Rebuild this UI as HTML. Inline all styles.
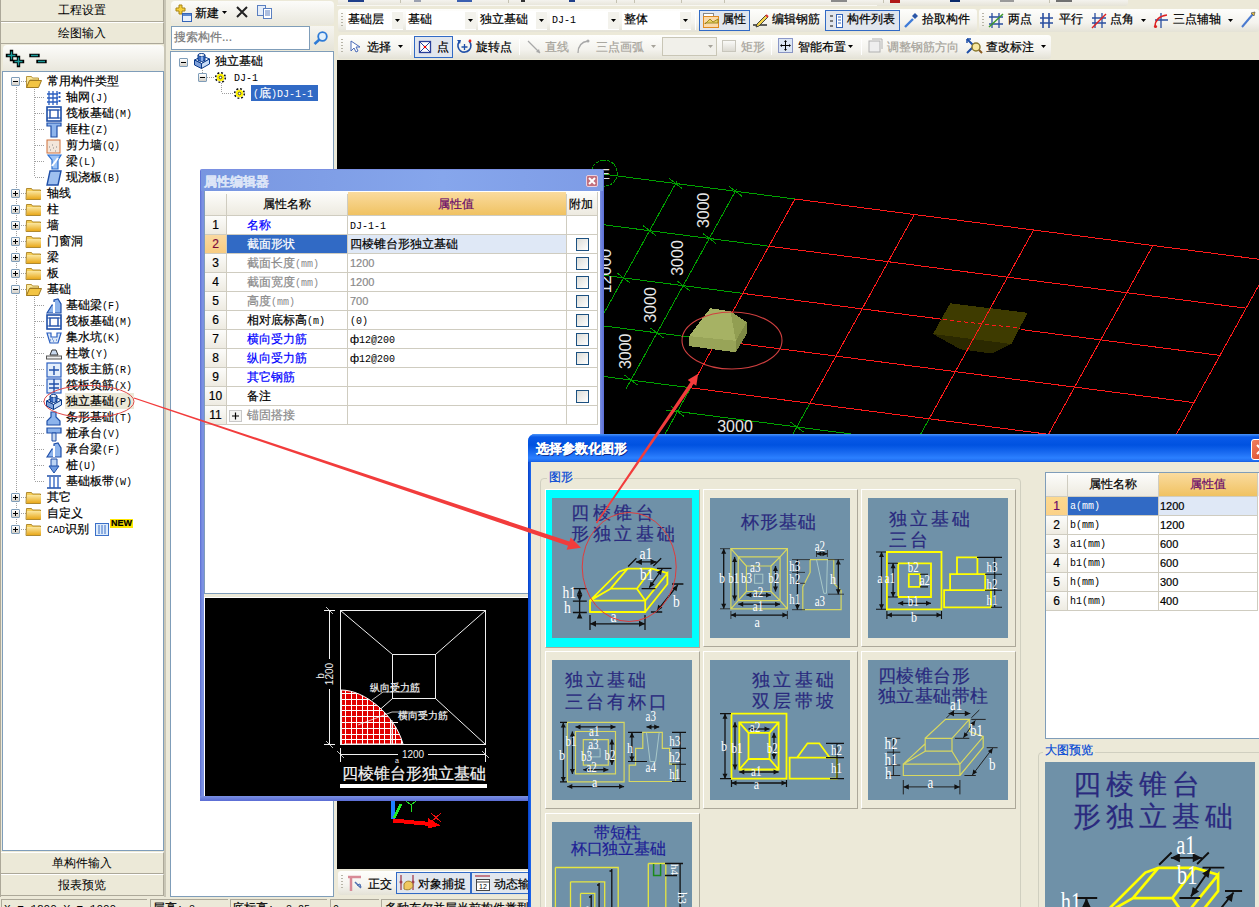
<!DOCTYPE html><html><head><meta charset="utf-8"><style>
*{box-sizing:border-box;margin:0;padding:0}
html,body{width:1259px;height:907px;overflow:hidden;background:#ECE9D8;font-family:"Liberation Sans",sans-serif;font-size:12px;color:#000;position:relative}
.a{position:absolute}
.t{position:absolute;white-space:nowrap;line-height:12px;font-size:12px;-webkit-text-stroke:0.2px currentColor}
.btn{position:absolute;background:#ECE9D8;border-bottom:1px solid #ACA899;border-right:1px solid #ACA899;border-top:1px solid #fff;text-align:center;font-size:12px;line-height:20px}
.tree{position:absolute;background:#fff;border:1px solid #7F9DB9}
.m{font-family:"Liberation Mono",monospace;font-size:10px;-webkit-text-stroke:0}
svg{position:absolute;overflow:visible}
.ex{position:absolute;width:9px;height:9px;border:1px solid #7F9DB9;background:linear-gradient(#fff,#D4D0C8);border-radius:1px}
.ex:before{content:"";position:absolute;left:1px;top:3px;width:5px;height:1px;background:#000}
.ex.p:after{content:"";position:absolute;left:3px;top:1px;width:1px;height:5px;background:#000}
.dv{position:absolute;width:1px;background-image:linear-gradient(#A0A0A0 50%,transparent 50%);background-size:1px 2px}
.dh{position:absolute;height:1px;background-image:linear-gradient(90deg,#A0A0A0 50%,transparent 50%);background-size:2px 1px}
</style></head><body>
<svg width="0" height="0" style="position:absolute"><defs><linearGradient id="fg" x1="0" y1="0" x2="0" y2="1"><stop offset="0" stop-color="#FBE7A0"/><stop offset="1" stop-color="#E9A91C"/></linearGradient></defs></svg>
<div class="a" style="left:0;top:0;width:165px;height:897px;background:#ECE9D8;border-left:1px solid #ACA899"></div>
<div class="btn" style="left:1px;top:0;width:163px;height:22px;border-top:none">工程设置</div>
<div class="btn" style="left:1px;top:22px;width:163px;height:22px">绘图输入</div>
<div class="a" style="left:3px;top:45px;width:161px;height:26px;background:linear-gradient(#FCFCFA,#E9E7DC);border-radius:4px 4px 0 0"></div>
<svg style="left:0;top:44px" width="60" height="26" viewBox="0 0 60 26"><g stroke="#000" stroke-width="3.4" stroke-linecap="square"><path d="M11.5 7.5v8M7.5 11.5h8M18.5 13.5v8M14.5 17.5h8M31 11.5h7M38 17.5h7"/></g><g stroke="#1A9A9A" stroke-width="1.4"><path d="M11.5 7.5v8M7.5 11.5h8M18.5 13.5v8M14.5 17.5h8M31 11.5h7M38 17.5h7"/></g></svg>
<div class="tree" style="left:2px;top:71px;width:162px;height:780px"></div>
<div class="dv" style="left:16px;top:87px;height:443px"></div>
<div class="dv" style="left:34px;top:87px;height:90px"></div>
<div class="dv" style="left:34px;top:295px;height:186px"></div>
<div class="dh" style="left:21px;top:81px;width:5px"></div>
<div class="ex" style="left:11px;top:77px"></div>
<svg style="left:26px;top:75px" width="16" height="13" viewBox="0 0 16 13"><path d="M0.5 1.5h5l1 1.5h6v2H4L0.5 12.5z" fill="#F9E79A" stroke="#B8943A" stroke-width="1"/><path d="M3.5 5.5h12l-3 7H0.5z" fill="#F2C443" stroke="#A07A20" stroke-width="1"/></svg>
<div class="t" style="left:47px;top:75px;">常用构件类型</div>
<div class="dh" style="left:35px;top:97px;width:10px"></div>
<svg style="left:46px;top:90px" width="16" height="16" viewBox="0 0 16 16"><path d="M3 1v14M7 1v14M11 1v14M1 4h11M1 8h11M1 12h11" stroke="#2B5FC0" stroke-width="1.3"/><rect x="12.5" y="2" width="2" height="2" fill="#2B5FC0"/><rect x="12.5" y="6" width="2" height="2" fill="#2B5FC0"/><rect x="12.5" y="10" width="2" height="2" fill="#2B5FC0"/></svg>
<div class="t" style="left:66px;top:91px;">轴网<span class="m">(J)</span></div>
<div class="dh" style="left:35px;top:113px;width:10px"></div>
<svg style="left:46px;top:106px" width="16" height="16" viewBox="0 0 16 16"><rect x="1" y="1" width="14" height="14" fill="#fff" stroke="#1F4FA8" stroke-width="1.6"/><rect x="4" y="4" width="8" height="8" fill="none" stroke="#1F4FA8" stroke-width="1.4"/><path d="M1 4h3M12 4h3M1 12h3M12 12h3" stroke="#1F4FA8"/></svg>
<div class="t" style="left:66px;top:107px;">筏板基础<span class="m">(M)</span></div>
<div class="dh" style="left:35px;top:129px;width:10px"></div>
<svg style="left:46px;top:122px" width="16" height="16" viewBox="0 0 16 16"><path d="M1 1h14v3h-4v11H5V4H1z" fill="#8DB4EC" stroke="#1F4FA8" stroke-width="1.2"/></svg>
<div class="t" style="left:66px;top:123px;">框柱<span class="m">(Z)</span></div>
<div class="dh" style="left:35px;top:145px;width:10px"></div>
<svg style="left:46px;top:138px" width="16" height="16" viewBox="0 0 16 16"><rect x="1" y="2" width="13" height="13" fill="#F3E6DA" stroke="#D0703A"/><path d="M4 12h1M7 10h1M9 13h1M6 7h1M10 9h1M3 9h1" stroke="#888"/></svg>
<div class="t" style="left:66px;top:139px;">剪力墙<span class="m">(Q)</span></div>
<div class="dh" style="left:35px;top:161px;width:10px"></div>
<svg style="left:46px;top:154px" width="16" height="16" viewBox="0 0 16 16"><path d="M2 1h13l-3 5v9H6V6z" fill="#9CC3F5" stroke="#2B6FD0" stroke-width="1.2"/><path d="M6 12l6-8" stroke="#fff" stroke-width="2"/></svg>
<div class="t" style="left:66px;top:155px;">梁<span class="m">(L)</span></div>
<div class="dh" style="left:35px;top:177px;width:10px"></div>
<svg style="left:46px;top:170px" width="16" height="16" viewBox="0 0 16 16"><path d="M4 1h11l-3 14H1z" fill="#9EC0F0" stroke="#1F4FA8" stroke-width="1.4"/></svg>
<div class="t" style="left:66px;top:171px;">现浇板<span class="m">(B)</span></div>
<div class="dh" style="left:21px;top:193px;width:5px"></div>
<div class="ex p" style="left:11px;top:189px"></div>
<svg style="left:26px;top:187px" width="16" height="13" viewBox="0 0 16 13"><path d="M0.5 1.5h5l1 1.5h8v9.5h-14.5z" fill="#F5CD55" stroke="#B08A30" stroke-width="1"/><rect x="1" y="4" width="14" height="8" fill="url(#fg)"/></svg>
<div class="t" style="left:47px;top:187px;">轴线</div>
<div class="dh" style="left:21px;top:209px;width:5px"></div>
<div class="ex p" style="left:11px;top:205px"></div>
<svg style="left:26px;top:203px" width="16" height="13" viewBox="0 0 16 13"><path d="M0.5 1.5h5l1 1.5h8v9.5h-14.5z" fill="#F5CD55" stroke="#B08A30" stroke-width="1"/><rect x="1" y="4" width="14" height="8" fill="url(#fg)"/></svg>
<div class="t" style="left:47px;top:203px;">柱</div>
<div class="dh" style="left:21px;top:225px;width:5px"></div>
<div class="ex p" style="left:11px;top:221px"></div>
<svg style="left:26px;top:219px" width="16" height="13" viewBox="0 0 16 13"><path d="M0.5 1.5h5l1 1.5h8v9.5h-14.5z" fill="#F5CD55" stroke="#B08A30" stroke-width="1"/><rect x="1" y="4" width="14" height="8" fill="url(#fg)"/></svg>
<div class="t" style="left:47px;top:219px;">墙</div>
<div class="dh" style="left:21px;top:241px;width:5px"></div>
<div class="ex p" style="left:11px;top:237px"></div>
<svg style="left:26px;top:235px" width="16" height="13" viewBox="0 0 16 13"><path d="M0.5 1.5h5l1 1.5h8v9.5h-14.5z" fill="#F5CD55" stroke="#B08A30" stroke-width="1"/><rect x="1" y="4" width="14" height="8" fill="url(#fg)"/></svg>
<div class="t" style="left:47px;top:235px;">门窗洞</div>
<div class="dh" style="left:21px;top:257px;width:5px"></div>
<div class="ex p" style="left:11px;top:253px"></div>
<svg style="left:26px;top:251px" width="16" height="13" viewBox="0 0 16 13"><path d="M0.5 1.5h5l1 1.5h8v9.5h-14.5z" fill="#F5CD55" stroke="#B08A30" stroke-width="1"/><rect x="1" y="4" width="14" height="8" fill="url(#fg)"/></svg>
<div class="t" style="left:47px;top:251px;">梁</div>
<div class="dh" style="left:21px;top:273px;width:5px"></div>
<div class="ex p" style="left:11px;top:269px"></div>
<svg style="left:26px;top:267px" width="16" height="13" viewBox="0 0 16 13"><path d="M0.5 1.5h5l1 1.5h8v9.5h-14.5z" fill="#F5CD55" stroke="#B08A30" stroke-width="1"/><rect x="1" y="4" width="14" height="8" fill="url(#fg)"/></svg>
<div class="t" style="left:47px;top:267px;">板</div>
<div class="dh" style="left:21px;top:289px;width:5px"></div>
<div class="ex" style="left:11px;top:285px"></div>
<svg style="left:26px;top:283px" width="16" height="13" viewBox="0 0 16 13"><path d="M0.5 1.5h5l1 1.5h6v2H4L0.5 12.5z" fill="#F9E79A" stroke="#B8943A" stroke-width="1"/><path d="M3.5 5.5h12l-3 7H0.5z" fill="#F2C443" stroke="#A07A20" stroke-width="1"/></svg>
<div class="t" style="left:47px;top:283px;">基础</div>
<div class="dh" style="left:35px;top:305px;width:10px"></div>
<svg style="left:46px;top:298px" width="16" height="16" viewBox="0 0 16 16"><path d="M1 15l5-8h2V2l4-1 3 5v9z" fill="#8DB4EC" stroke="#1F4FA8" stroke-width="1.2"/><path d="M8 4v11" stroke="#fff" stroke-width="2"/></svg>
<div class="t" style="left:66px;top:299px;">基础梁<span class="m">(F)</span></div>
<div class="dh" style="left:35px;top:321px;width:10px"></div>
<svg style="left:46px;top:314px" width="16" height="16" viewBox="0 0 16 16"><rect x="1" y="1" width="14" height="14" fill="#fff" stroke="#1F4FA8" stroke-width="1.6"/><rect x="4" y="4" width="8" height="8" fill="none" stroke="#1F4FA8" stroke-width="1.4"/><path d="M1 4h3M12 4h3M1 12h3M12 12h3" stroke="#1F4FA8"/></svg>
<div class="t" style="left:66px;top:315px;">筏板基础<span class="m">(M)</span></div>
<div class="dh" style="left:35px;top:337px;width:10px"></div>
<svg style="left:46px;top:330px" width="16" height="16" viewBox="0 0 16 16"><path d="M1 3h4v4h6V3h4l-3 10H4z" fill="#DDE9F8" stroke="#2B5FC0" stroke-width="1.2"/><path d="M4 10h1M7 11h1M10 10h1M6 9h1" stroke="#2B5FC0"/></svg>
<div class="t" style="left:66px;top:331px;">集水坑<span class="m">(K)</span></div>
<div class="dh" style="left:35px;top:353px;width:10px"></div>
<svg style="left:46px;top:346px" width="16" height="16" viewBox="0 0 16 16"><path d="M6 4h4l2 5H4z" fill="#C8D8EE" stroke="#333"/><rect x="0.5" y="10" width="15" height="3" fill="#eee" stroke="#555"/></svg>
<div class="t" style="left:66px;top:347px;">柱墩<span class="m">(Y)</span></div>
<div class="dh" style="left:35px;top:369px;width:10px"></div>
<svg style="left:46px;top:362px" width="16" height="16" viewBox="0 0 16 16"><rect x="1" y="1" width="14" height="14" fill="#E3EEFB" stroke="#2B5FC0" stroke-width="1.2"/><path d="M8 4v9M3 8h10" stroke="#1F4FA8" stroke-width="1.4"/></svg>
<div class="t" style="left:66px;top:363px;">筏板主筋<span class="m">(R)</span></div>
<div class="dh" style="left:35px;top:385px;width:10px"></div>
<svg style="left:46px;top:378px" width="16" height="16" viewBox="0 0 16 16"><rect x="1" y="1" width="14" height="14" fill="#E3EEFB" stroke="#2B5FC0" stroke-width="1.2"/><path d="M8 1v14M3 6h10M3 10h10" stroke="#1F4FA8" stroke-width="1.4"/></svg>
<div class="t" style="left:66px;top:379px;">筏板负筋<span class="m">(X)</span></div>
<div class="dh" style="left:35px;top:401px;width:10px"></div>
<div class="a" style="left:65px;top:393px;width:69px;height:16px;background:#ECE9D8"></div>
<svg style="left:46px;top:394px" width="16" height="16" viewBox="0 0 16 16"><path d="M0.5 7L8.5 3L15.5 6L7.5 10.5z" fill="#fff" stroke="#0A3A8A"/><path d="M0.5 7V12L7.5 15.5V10.5z" fill="#7FA0D8" stroke="#0A3A8A"/><path d="M7.5 10.5L15.5 6V11L7.5 15.5z" fill="#C8DCF6" stroke="#0A3A8A"/><path d="M4 2V7.5Q7.5 9.5 11 7.5V2" fill="#3A6AC0" stroke="#0A3A8A"/><ellipse cx="7.5" cy="2" rx="3.5" ry="1.5" fill="#fff" stroke="#0A3A8A"/><path d="M8 3.5V8" stroke="#A8C4EE" stroke-width="1.5"/></svg>
<div class="t" style="left:66px;top:395px;">独立基础<span class="m">(P)</span></div>
<div class="dh" style="left:35px;top:417px;width:10px"></div>
<svg style="left:46px;top:410px" width="16" height="16" viewBox="0 0 16 16"><path d="M5 2h5v5l4 4v4H1v-4l4-4z" fill="#8DB4EC" stroke="#1F4FA8" stroke-width="1.2"/></svg>
<div class="t" style="left:66px;top:411px;">条形基础<span class="m">(T)</span></div>
<div class="dh" style="left:35px;top:433px;width:10px"></div>
<svg style="left:46px;top:426px" width="16" height="16" viewBox="0 0 16 16"><path d="M1 2h14v5H1z" fill="#8DB4EC" stroke="#1F4FA8" stroke-width="1.2"/><path d="M6 7h4v8H6z" fill="#C8D8EE" stroke="#1F4FA8"/></svg>
<div class="t" style="left:66px;top:427px;">桩承台<span class="m">(V)</span></div>
<div class="dh" style="left:35px;top:449px;width:10px"></div>
<svg style="left:46px;top:442px" width="16" height="16" viewBox="0 0 16 16"><path d="M1 15l5-8h2V2l4-1 3 5v9z" fill="#8DB4EC" stroke="#1F4FA8" stroke-width="1.2"/><path d="M8 4v11" stroke="#fff" stroke-width="2"/></svg>
<div class="t" style="left:66px;top:443px;">承台梁<span class="m">(F)</span></div>
<div class="dh" style="left:35px;top:465px;width:10px"></div>
<svg style="left:46px;top:458px" width="16" height="16" viewBox="0 0 16 16"><path d="M5 1h6v9H5z" fill="#BCD4F4" stroke="#1F4FA8"/><path d="M3 8h10l-5 7z" fill="#6E9BE0" stroke="#1F4FA8"/></svg>
<div class="t" style="left:66px;top:459px;">桩<span class="m">(U)</span></div>
<div class="dh" style="left:35px;top:481px;width:10px"></div>
<svg style="left:46px;top:474px" width="16" height="16" viewBox="0 0 16 16"><path d="M1 2h14M1 14h14" stroke="#1F4FA8" stroke-width="1.5"/><path d="M4 3v11M8 3v11M12 3v11" stroke="#2B5FC0" stroke-width="1.3"/></svg>
<div class="t" style="left:66px;top:475px;">基础板带<span class="m">(W)</span></div>
<div class="dh" style="left:21px;top:497px;width:5px"></div>
<div class="ex p" style="left:11px;top:493px"></div>
<svg style="left:26px;top:491px" width="16" height="13" viewBox="0 0 16 13"><path d="M0.5 1.5h5l1 1.5h8v9.5h-14.5z" fill="#F5CD55" stroke="#B08A30" stroke-width="1"/><rect x="1" y="4" width="14" height="8" fill="url(#fg)"/></svg>
<div class="t" style="left:47px;top:491px;">其它</div>
<div class="dh" style="left:21px;top:513px;width:5px"></div>
<div class="ex p" style="left:11px;top:509px"></div>
<svg style="left:26px;top:507px" width="16" height="13" viewBox="0 0 16 13"><path d="M0.5 1.5h5l1 1.5h8v9.5h-14.5z" fill="#F5CD55" stroke="#B08A30" stroke-width="1"/><rect x="1" y="4" width="14" height="8" fill="url(#fg)"/></svg>
<div class="t" style="left:47px;top:507px;">自定义</div>
<div class="dh" style="left:21px;top:529px;width:5px"></div>
<div class="ex p" style="left:11px;top:525px"></div>
<svg style="left:26px;top:523px" width="16" height="13" viewBox="0 0 16 13"><path d="M0.5 1.5h5l1 1.5h8v9.5h-14.5z" fill="#F5CD55" stroke="#B08A30" stroke-width="1"/><rect x="1" y="4" width="14" height="8" fill="url(#fg)"/></svg>
<div class="t" style="left:47px;top:523px;"><span class="m">CAD</span>识别</div>
<svg style="left:95px;top:521px" width="40" height="16" viewBox="0 0 40 16"><rect x="0.5" y="2.5" width="13" height="12" fill="#DDEBFA" stroke="#3A6FC8"/><path d="M4 4v9M7 4v9M10 4v9" stroke="#3A6FC8"/></svg>
<div class="t" style="left:110px;top:519px;font-size:9px;line-height:9px;font-weight:bold;color:#000;background:#FFE600;padding:0 1px">NEW</div>
<div class="btn" style="left:1px;top:852px;width:163px;height:22px">单构件输入</div>
<div class="btn" style="left:1px;top:874px;width:163px;height:22px">报表预览</div>
<div class="a" style="left:164px;top:0;width:2px;height:897px;background:#C9C6B6"></div>
<div class="a" style="left:171px;top:1px;width:163px;height:24px;background:linear-gradient(#FCFCFA,#E9E7DC);border-radius:4px"></div>
<svg style="left:175px;top:4px" width="18" height="18" viewBox="0 0 18 18"><path d="M4 1h3v3h3v3H7v3H4V7H1V4h3z" fill="#F6D03A" stroke="#A88416"/><rect x="7.5" y="9.5" width="9" height="8" fill="#E8F0FB" stroke="#3464B8"/><rect x="8" y="10" width="8" height="2" fill="#5A86D0"/></svg>
<div class="t" style="left:195px;top:7px;">新建</div>
<svg style="left:222px;top:11px" width="6" height="4"><path d="M0 0h5l-2.5 3z" fill="#000"/></svg>
<svg style="left:235px;top:5px" width="14" height="14" viewBox="0 0 14 14"><path d="M2 2l10 10M12 2L2 12" stroke="#222" stroke-width="2"/></svg>
<svg style="left:257px;top:5px" width="16" height="14" viewBox="0 0 16 14"><rect x="0.5" y="0.5" width="8" height="10" fill="#E6EEF9" stroke="#5A7FC0"/><rect x="6.5" y="3.5" width="8" height="10" fill="#fff" stroke="#5A7FC0"/><path d="M8 6h5M8 8h5M8 10h5" stroke="#5A7FC0"/></svg>
<div class="a" style="left:171px;top:26px;width:139px;height:24px;background:#fff;border:1px solid #7F9DB9"></div>
<div class="t" style="left:174px;top:31px;color:#7A7A7A">搜索构件...</div>
<div class="a" style="left:310px;top:26px;width:24px;height:24px;background:linear-gradient(#F6F5F0,#E6E4D8)"></div>
<svg style="left:313px;top:31px" width="16" height="14" viewBox="0 0 16 14"><circle cx="9.5" cy="5.5" r="4.3" fill="#E2F0FB" stroke="#2E7BD6" stroke-width="1.8"/><path d="M6.5 8.5L1.5 13" stroke="#2E7BD6" stroke-width="2.6"/></svg>
<div class="tree" style="left:170px;top:51px;width:164px;height:846px"></div>
<div class="ex" style="left:179px;top:58px"></div>
<svg style="left:194px;top:53px" width="16" height="16" viewBox="0 0 16 16"><path d="M0.5 7L8.5 3L15.5 6L7.5 10.5z" fill="#fff" stroke="#0A3A8A"/><path d="M0.5 7V12L7.5 15.5V10.5z" fill="#7FA0D8" stroke="#0A3A8A"/><path d="M7.5 10.5L15.5 6V11L7.5 15.5z" fill="#C8DCF6" stroke="#0A3A8A"/><path d="M4 2V7.5Q7.5 9.5 11 7.5V2" fill="#3A6AC0" stroke="#0A3A8A"/><ellipse cx="7.5" cy="2" rx="3.5" ry="1.5" fill="#fff" stroke="#0A3A8A"/><path d="M8 3.5V8" stroke="#A8C4EE" stroke-width="1.5"/></svg>
<div class="t" style="left:215px;top:55px;">独立基础</div>
<div class="dv" style="left:202px;top:68px;height:6px"></div>
<div class="ex" style="left:198px;top:73px"></div>
<div class="dh" style="left:207px;top:77px;width:8px"></div>
<svg style="left:215px;top:72px" width="11" height="11" viewBox="0 0 11 11"><circle cx="5.5" cy="5.5" r="4.8" fill="none" stroke="#111" stroke-width="1.6" stroke-dasharray="1.9 1.87"/><circle cx="5.5" cy="5.5" r="3.8" fill="#FFF200"/><circle cx="5.5" cy="5.5" r="1.3" fill="#fff" stroke="#333" stroke-width="0.9"/></svg>
<div class="t" style="left:234px;top:71px;"><span class="m">DJ-1</span></div>
<div class="dv" style="left:221px;top:83px;height:10px"></div>
<div class="dh" style="left:222px;top:93px;width:12px"></div>
<svg style="left:234px;top:88px" width="11" height="11" viewBox="0 0 11 11"><circle cx="5.5" cy="5.5" r="4.8" fill="none" stroke="#111" stroke-width="1.6" stroke-dasharray="1.9 1.87"/><circle cx="5.5" cy="5.5" r="3.8" fill="#FFF200"/><circle cx="5.5" cy="5.5" r="1.3" fill="#fff" stroke="#333" stroke-width="0.9"/></svg>
<div class="a" style="left:251px;top:85px;width:67px;height:16px;background:#316AC5"></div>
<div class="t" style="left:253px;top:87px;color:#fff"><span class="m">(</span>底<span class="m">)DJ-1-1</span></div>
<div class="a" style="left:337px;top:0;width:922px;height:60px;background:#ECE9D8"></div>
<div class="a" style="left:338px;top:0;width:790px;height:6px;background:linear-gradient(#F4F3EE,#E6E4D8);border-radius:0 0 3px 3px"></div>
<div class="a" style="left:348px;top:0;width:16px;height:2px;background:#1F3F8A"></div>
<div class="a" style="left:414px;top:0;width:7px;height:2px;background:#9AA0B0"></div>
<div class="a" style="left:457px;top:0;width:15px;height:2px;background:#3A5FB0"></div>
<div class="a" style="left:521px;top:0;width:4px;height:2px;background:#333"></div>
<div class="a" style="left:569px;top:0;width:6px;height:2px;background:#1F3F8A"></div>
<div class="a" style="left:831px;top:0;width:16px;height:2px;background:#8A8A8A"></div>
<div class="a" style="left:890px;top:0;width:10px;height:3px;background:#B01818"></div>
<div class="a" style="left:950px;top:0;width:10px;height:2px;background:#0A2A6A"></div>
<div class="a" style="left:1000px;top:0;width:14px;height:2px;background:#9A9A9A"></div>
<div class="a" style="left:1056px;top:0;width:16px;height:2px;background:#707070"></div>
<div class="a" style="left:400px;top:0;width:1px;height:3px;background:#C5C2B2"></div>
<div class="a" style="left:508px;top:0;width:1px;height:3px;background:#C5C2B2"></div>
<div class="a" style="left:616px;top:0;width:1px;height:3px;background:#C5C2B2"></div>
<div class="a" style="left:634px;top:0;width:1px;height:3px;background:#C5C2B2"></div>
<div class="a" style="left:681px;top:0;width:1px;height:3px;background:#C5C2B2"></div>
<div class="a" style="left:724px;top:0;width:1px;height:3px;background:#C5C2B2"></div>
<div class="a" style="left:883px;top:0;width:1px;height:3px;background:#C5C2B2"></div>
<div class="a" style="left:1049px;top:0;width:1px;height:3px;background:#C5C2B2"></div>
<div class="a" style="left:337px;top:5px;width:540px;height:1px;background:#F8F7F2"></div>
<div class="a" style="left:338px;top:9px;width:639px;height:23px;background:linear-gradient(#FEFEFC,#F4F3EE 60%,#E4E2D6);border-radius:3px"></div>
<div class="a" style="left:979px;top:9px;width:280px;height:23px;background:linear-gradient(#FEFEFC,#F4F3EE 60%,#E4E2D6);border-radius:3px"></div>
<div class="a" style="left:341px;top:13px;width:2px;height:15px;background-image:linear-gradient(#B8B5A8 50%,transparent 50%);background-size:2px 3px"></div>
<div class="a" style="left:346px;top:11px;width:57px;height:19px;background:#fff"></div>
<div class="a" style="left:392px;top:12px;width:11px;height:17px;background:#F3F2EC"></div>
<svg style="left:395px;top:19px" width="6" height="4"><path d="M0 0h5l-2.5 3z" fill="#000"/></svg>
<div class="t" style="left:348px;top:13px;">基础层</div>
<div class="a" style="left:406px;top:11px;width:70px;height:19px;background:#fff"></div>
<div class="a" style="left:465px;top:12px;width:11px;height:17px;background:#F3F2EC"></div>
<svg style="left:468px;top:19px" width="6" height="4"><path d="M0 0h5l-2.5 3z" fill="#000"/></svg>
<div class="t" style="left:408px;top:13px;">基础</div>
<div class="a" style="left:478px;top:11px;width:69px;height:19px;background:#fff"></div>
<div class="a" style="left:536px;top:12px;width:11px;height:17px;background:#F3F2EC"></div>
<svg style="left:539px;top:19px" width="6" height="4"><path d="M0 0h5l-2.5 3z" fill="#000"/></svg>
<div class="t" style="left:480px;top:13px;">独立基础</div>
<div class="a" style="left:550px;top:11px;width:69px;height:19px;background:#fff"></div>
<div class="a" style="left:608px;top:12px;width:11px;height:17px;background:#F3F2EC"></div>
<svg style="left:611px;top:19px" width="6" height="4"><path d="M0 0h5l-2.5 3z" fill="#000"/></svg>
<div class="t" style="left:552px;top:13px;"><span class="m">DJ-1</span></div>
<div class="a" style="left:622px;top:11px;width:69px;height:19px;background:#fff"></div>
<div class="a" style="left:680px;top:12px;width:11px;height:17px;background:#F3F2EC"></div>
<svg style="left:683px;top:19px" width="6" height="4"><path d="M0 0h5l-2.5 3z" fill="#000"/></svg>
<div class="t" style="left:624px;top:13px;">整体</div>
<div class="a" style="left:695px;top:14px;width:1px;height:16px;background:#C5C2B2;border-right:1px solid #fff"></div>
<div class="a" style="left:699px;top:10px;width:51px;height:21px;background:#E1E6EE;border:1px solid #316AC5"></div>
<svg style="left:703px;top:13px" width="16" height="16" viewBox="0 0 16 16"><rect x="0.5" y="0.5" width="10" height="3" fill="#fff" stroke="#888"/><rect x="0.5" y="3.5" width="15" height="11" fill="#FBD9A8" stroke="#E08A20"/><path d="M2 11l5-5 3 3 5-3v4H2z" fill="#E8D060" stroke="#8A7A10" stroke-width="0.8"/></svg>
<div class="t" style="left:722px;top:13px;">属性</div>
<svg style="left:752px;top:12px" width="18" height="16" viewBox="0 0 18 16"><path d="M1 13h14" stroke="#222" stroke-width="1.4"/><path d="M5 12l9-9 2 2-9 9-3 1z" fill="#F3D34A" stroke="#333" stroke-width="0.9"/><path d="M14 3l2 2" stroke="#D33" stroke-width="2"/></svg>
<div class="t" style="left:772px;top:13px;">编辑钢筋</div>
<div class="a" style="left:825px;top:10px;width:75px;height:21px;background:#E1E6EE;border:1px solid #316AC5"></div>
<svg style="left:829px;top:13px" width="14" height="16" viewBox="0 0 14 16"><path d="M1 3h3M1 8h3M1 13h3" stroke="#555" stroke-width="1.5"/><rect x="7.5" y="1.5" width="6" height="13" fill="#fff" stroke="#3464B8"/><path d="M9 4h3M9 7h3M9 10h3" stroke="#3464B8"/></svg>
<div class="t" style="left:847px;top:13px;">构件列表</div>
<svg style="left:903px;top:12px" width="16" height="17" viewBox="0 0 16 17"><path d="M2 15l8-8" stroke="#3E7BD8" stroke-width="2.4"/><path d="M9 4l3-3 3 3-3 3z" fill="#2A56A8"/></svg>
<div class="t" style="left:922px;top:13px;">拾取构件</div>
<div class="a" style="left:982px;top:13px;width:2px;height:15px;background-image:linear-gradient(#B8B5A8 50%,transparent 50%);background-size:2px 3px"></div>
<svg style="left:988px;top:12px" width="16" height="17" viewBox="0 0 16 17"><path d="M4 1v15M11 1v15M1 5h14M1 12h14" stroke="#2A4FA0" stroke-width="1.3"/><path d="M1 15L15 2" stroke="#3C9A2A" stroke-width="1.5"/></svg>
<div class="t" style="left:1008px;top:13px;">两点</div>
<svg style="left:1039px;top:12px" width="15" height="17" viewBox="0 0 15 17"><path d="M4 1v15M10 1v15M1 6h13M1 11h13" stroke="#2A4FA0" stroke-width="1.6"/></svg>
<div class="t" style="left:1059px;top:13px;">平行</div>
<svg style="left:1091px;top:12px" width="16" height="17" viewBox="0 0 16 17"><path d="M4 1v15M11 1v15M1 6h14M1 11h14" stroke="#2A4FA0" stroke-width="1.3"/><path d="M1 16L15 2" stroke="#D22" stroke-width="1.5"/></svg>
<div class="t" style="left:1110px;top:13px;">点角</div>
<svg style="left:1141px;top:19px" width="6" height="4"><path d="M0 0h5l-2.5 3z" fill="#000"/></svg>
<svg style="left:1153px;top:12px" width="16" height="17" viewBox="0 0 16 17"><path d="M8 1v15M2 8h13" stroke="#2A4FA0" stroke-width="1.3"/><path d="M2 15C2 8 6 4 14 3" stroke="#D22" stroke-width="1.5" fill="none"/><circle cx="2.5" cy="14.5" r="1.6" fill="#D22"/></svg>
<div class="t" style="left:1173px;top:13px;">三点辅轴</div>
<svg style="left:1228px;top:19px" width="6" height="4"><path d="M0 0h5l-2.5 3z" fill="#000"/></svg>
<svg style="left:1240px;top:11px" width="17" height="18" viewBox="0 0 17 18"><path d="M2 16L13 3" stroke="#4A7AD0" stroke-width="2"/><path d="M11 2l4-1-1 4z" fill="#E8C040" stroke="#555" stroke-width="0.7"/></svg>
<div class="a" style="left:338px;top:35px;width:713px;height:24px;background:linear-gradient(#FEFEFC,#F4F3EE 60%,#E4E2D6);border-radius:3px"></div>
<div class="a" style="left:341px;top:39px;width:2px;height:15px;background-image:linear-gradient(#B8B5A8 50%,transparent 50%);background-size:2px 3px"></div>
<svg style="left:350px;top:40px" width="10" height="13" viewBox="0 0 10 13"><path d="M1 1v10l3-3 2 4 2-1-2-4h4z" fill="#fff" stroke="#4A6AB8"/></svg>
<div class="t" style="left:367px;top:41px;">选择</div>
<svg style="left:398px;top:45px" width="6" height="4"><path d="M0 0h5l-2.5 3z" fill="#000"/></svg>
<div class="a" style="left:410px;top:39px;width:1px;height:16px;background:#C5C2B2;border-right:1px solid #fff"></div>
<div class="a" style="left:414px;top:36px;width:39px;height:22px;background:#E1E6EE;border:1px solid #316AC5"></div>
<svg style="left:419px;top:41px" width="12" height="12" viewBox="0 0 12 12"><rect x="0.5" y="0.5" width="11" height="11" fill="#fff" stroke="#2A3F9A" stroke-width="1.3"/><path d="M1 1l10 10M11 1L1 11" stroke="#2A3F9A"/><circle cx="6" cy="6" r="1.3" fill="#E00"/></svg>
<div class="t" style="left:437px;top:41px;">点</div>
<svg style="left:456px;top:38px" width="17" height="17" viewBox="0 0 17 17"><path d="M3 4A6.5 6.5 0 1 0 13 3" fill="none" stroke="#1F4FA8" stroke-width="1.6"/><path d="M1 2l4 0-1 4z" fill="#1F4FA8"/><path d="M8.5 6v6M5.5 9h6" stroke="#1F4FA8" stroke-width="1.3"/><circle cx="14" cy="3" r="1.4" fill="#D22"/></svg>
<div class="t" style="left:476px;top:41px;">旋转点</div>
<div class="a" style="left:519px;top:39px;width:1px;height:16px;background:#C5C2B2;border-right:1px solid #fff"></div>
<svg style="left:527px;top:40px" width="14" height="14" viewBox="0 0 14 14"><path d="M1 1l12 12" stroke="#A8A8A8" stroke-width="1.3"/><path d="M13 13l-4-1 3-3z" fill="#A8A8A8"/></svg>
<div class="t" style="left:545px;top:41px;color:#A6A39A">直线</div>
<svg style="left:576px;top:39px" width="14" height="15" viewBox="0 0 14 15"><path d="M2 14C2 8 5 3 12 2" fill="none" stroke="#A8A8A8" stroke-width="1.3"/><circle cx="12" cy="2" r="1.5" fill="#A8A8A8"/></svg>
<div class="t" style="left:596px;top:41px;color:#A6A39A">三点画弧</div>
<svg style="left:651px;top:45px" width="6" height="4"><path d="M0 0h5l-2.5 3z" fill="#A6A39A"/></svg>
<div class="a" style="left:662px;top:37px;width:55px;height:19px;border:1px solid #C9C6B6;background:#F1F0EA"></div>
<svg style="left:708px;top:45px" width="6" height="4"><path d="M0 0h5l-2.5 3z" fill="#A6A39A"/></svg>
<div class="a" style="left:722px;top:40px;width:14px;height:12px;border:1px solid #C8C6BC;background:linear-gradient(#fafaf8,#dcdad2)"></div>
<div class="t" style="left:741px;top:41px;color:#A6A39A">矩形</div>
<div class="a" style="left:771px;top:39px;width:1px;height:16px;background:#C5C2B2;border-right:1px solid #fff"></div>
<svg style="left:778px;top:38px" width="15" height="15" viewBox="0 0 15 15"><rect x="0.5" y="0.5" width="14" height="14" fill="#DCE6F4" stroke="#2A3F9A" stroke-dasharray="1 1"/><path d="M7.5 3v9M3 7.5h9" stroke="#000" stroke-width="1"/><path d="M7.5 2l-1.5 2h3zM7.5 13l-1.5-2h3zM2 7.5l2-1.5v3zM13 7.5l-2-1.5v3z" fill="#000"/></svg>
<div class="t" style="left:798px;top:41px;">智能布置</div>
<svg style="left:848px;top:45px" width="6" height="4"><path d="M0 0h5l-2.5 3z" fill="#000"/></svg>
<div class="a" style="left:861px;top:39px;width:1px;height:16px;background:#C5C2B2;border-right:1px solid #fff"></div>
<svg style="left:868px;top:38px" width="15" height="15" viewBox="0 0 15 15"><rect x="1" y="3" width="11" height="11" fill="#EEE" stroke="#B0B0B0"/><path d="M4 1h10v10" fill="none" stroke="#B0B0B0"/></svg>
<div class="t" style="left:887px;top:41px;color:#A6A39A">调整钢筋方向</div>
<svg style="left:965px;top:37px" width="18" height="18" viewBox="0 0 18 18"><path d="M2 2l6 6M2 16l6-6" stroke="#1F4FA8" stroke-width="2"/><path d="M2 2v4M2 2h4" stroke="#1F4FA8" stroke-width="1.5"/><circle cx="11" cy="10" r="4" fill="#F8E8A0" stroke="#8A7A30" stroke-width="1.5"/><path d="M14 13l3 3" stroke="#8A5A20" stroke-width="2"/></svg>
<div class="t" style="left:986px;top:41px;">查改标注</div>
<svg style="left:1041px;top:45px" width="6" height="4"><path d="M0 0h5l-2.5 3z" fill="#000"/></svg>
<div class="a" style="left:337px;top:60px;width:922px;height:809px;background:#000"></div>
<svg style="left:0;top:0" width="1259" height="907"><defs><clipPath id="cc"><rect x="337" y="60" width="922" height="809"/></clipPath></defs><g clip-path="url(#cc)" shape-rendering="crispEdges"><line x1="601.7" y1="173.9" x2="795.0" y2="199.0" stroke="#00A000" stroke-width="1.0" /><line x1="575.6" y1="221.1" x2="768.9" y2="246.2" stroke="#00A000" stroke-width="1.0" /><line x1="549.5" y1="268.3" x2="742.8" y2="293.4" stroke="#00A000" stroke-width="1.0" /><line x1="523.4" y1="315.5" x2="716.7" y2="340.6" stroke="#00A000" stroke-width="1.0" /><line x1="497.3" y1="362.7" x2="690.6" y2="387.8" stroke="#00A000" stroke-width="1.0" /><line x1="690.6" y1="387.8" x2="659.3" y2="444.4" stroke="#00A000" stroke-width="1.0" /><line x1="809.9" y1="403.3" x2="778.6" y2="459.9" stroke="#00A000" stroke-width="1.0" /><line x1="929.2" y1="418.8" x2="897.9" y2="475.4" stroke="#00A000" stroke-width="1.0" /><line x1="1048.5" y1="434.3" x2="1017.2" y2="490.9" stroke="#00A000" stroke-width="1.0" /><line x1="1167.8" y1="449.8" x2="1136.5" y2="506.4" stroke="#00A000" stroke-width="1.0" /><line x1="736.7" y1="188.9" x2="625.7" y2="389.5" stroke="#00A000" stroke-width="1.0" /><line x1="677.0" y1="181.1" x2="566.1" y2="381.7" stroke="#00A000" stroke-width="1.0" /><line x1="665.6" y1="409.9" x2="1226.3" y2="482.7" stroke="#00A000" stroke-width="1.0" /><line x1="728.9" y1="186.2" x2="741.9" y2="196.2" stroke="#00A000" stroke-width="1.0" /><line x1="669.2" y1="178.5" x2="682.2" y2="188.5" stroke="#00A000" stroke-width="1.0" /><line x1="702.8" y1="233.4" x2="715.8" y2="243.4" stroke="#00A000" stroke-width="1.0" /><line x1="643.1" y1="225.7" x2="656.1" y2="235.7" stroke="#00A000" stroke-width="1.0" /><line x1="676.6" y1="280.6" x2="689.6" y2="290.6" stroke="#00A000" stroke-width="1.0" /><line x1="617.0" y1="272.9" x2="630.0" y2="282.9" stroke="#00A000" stroke-width="1.0" /><line x1="650.5" y1="327.9" x2="663.5" y2="337.9" stroke="#00A000" stroke-width="1.0" /><line x1="590.9" y1="320.1" x2="603.9" y2="330.1" stroke="#00A000" stroke-width="1.0" /><line x1="624.5" y1="375.1" x2="637.5" y2="385.1" stroke="#00A000" stroke-width="1.0" /><line x1="564.8" y1="367.3" x2="577.8" y2="377.3" stroke="#00A000" stroke-width="1.0" /><line x1="671.0" y1="406.4" x2="684.0" y2="416.4" stroke="#00A000" stroke-width="1.0" /><line x1="790.3" y1="421.9" x2="803.3" y2="431.9" stroke="#00A000" stroke-width="1.0" /><line x1="909.6" y1="437.4" x2="922.6" y2="447.4" stroke="#00A000" stroke-width="1.0" /><line x1="1029.0" y1="452.9" x2="1042.0" y2="462.9" stroke="#00A000" stroke-width="1.0" /><line x1="1148.2" y1="468.4" x2="1161.2" y2="478.4" stroke="#00A000" stroke-width="1.0" /><circle cx="604.3" cy="173.2" r="13" fill="none" stroke="#00A000" stroke-width="1" stroke-dasharray="3 1"/><text x="600" y="179" fill="#E0E0E0" font-size="15" font-family="Liberation Sans">E</text><line x1="795.0" y1="199.0" x2="1272.2" y2="261.0" stroke="#FF1A1A" stroke-width="1.0" /><line x1="768.9" y1="246.2" x2="1246.1" y2="308.2" stroke="#FF1A1A" stroke-width="1.0" /><line x1="742.8" y1="293.4" x2="943.2" y2="319.4" stroke="#FF1A1A" stroke-width="1.0" /><line x1="1020.8" y1="329.5" x2="1220.0" y2="355.4" stroke="#FF1A1A" stroke-width="1.0" /><line x1="716.7" y1="340.6" x2="1193.9" y2="402.6" stroke="#FF1A1A" stroke-width="1.0" /><line x1="690.6" y1="387.8" x2="1167.8" y2="449.8" stroke="#FF1A1A" stroke-width="1.0" /><polygon points="950.2,303.3 1027.6,312.8 1011.3,344 991.8,353.5 960.2,349.2 933,334" fill="#2B2900"/><polygon points="950.2,303.3 1027.6,312.8 1011.3,344 933,334" fill="#3E3B00"/><line x1="943.0" y1="319.6" x2="1020.4" y2="328.2" stroke="#FF1A1A" stroke-width="1" stroke-dasharray="4 3"/><line x1="795.0" y1="199.0" x2="690.6" y2="387.8" stroke="#FF1A1A" stroke-width="1.0" /><line x1="914.3" y1="214.5" x2="809.9" y2="403.3" stroke="#FF1A1A" stroke-width="1.0" /><line x1="1033.6" y1="230.0" x2="929.2" y2="418.8" stroke="#FF1A1A" stroke-width="1.0" /><line x1="1152.9" y1="245.5" x2="1048.5" y2="434.3" stroke="#FF1A1A" stroke-width="1.0" /><line x1="1272.2" y1="261.0" x2="1167.8" y2="449.8" stroke="#FF1A1A" stroke-width="1.0" /><text x="703.3" y="210.3" transform="rotate(-90 703.3 210.3)" fill="#E8E8E8" font-size="16" font-family="Liberation Sans" text-anchor="middle" dominant-baseline="central">3000</text><text x="677.0" y="258.0" transform="rotate(-90 677.0 258.0)" fill="#E8E8E8" font-size="16" font-family="Liberation Sans" text-anchor="middle" dominant-baseline="central">3000</text><text x="650.7" y="305.0" transform="rotate(-90 650.7 305.0)" fill="#E8E8E8" font-size="16" font-family="Liberation Sans" text-anchor="middle" dominant-baseline="central">3000</text><text x="625.2" y="351.3" transform="rotate(-90 625.2 351.3)" fill="#E8E8E8" font-size="16" font-family="Liberation Sans" text-anchor="middle" dominant-baseline="central">3000</text><text x="605" y="271" transform="rotate(-90 605 271)" fill="#E8E8E8" font-size="16" font-family="Liberation Sans" text-anchor="middle" dominant-baseline="central">12000</text><text x="735" y="426" fill="#E8E8E8" font-size="16" font-family="Liberation Sans" text-anchor="middle" dominant-baseline="central">3000</text><polygon points="689.1,336.1 735.8,340.8 746.8,322 746.8,333.8 735.8,352.3 689.1,346.1" fill="#8E9A50"/><polygon points="689.1,336.1 735.8,340.8 735.8,352.3 689.1,346.1" fill="#98A458"/><polygon points="735.8,340.8 746.8,322 746.8,333.8 735.8,352.3" fill="#7F8A45"/><polygon points="689.1,336.1 710.3,308.2 730.5,311.4 735.8,340.8" fill="#A6B264"/><polygon points="730.5,311.4 746.8,322 735.8,340.8" fill="#929E52"/><path d="M392.5 797V819" stroke="#1E7FFF" stroke-width="4"/><path d="M394 818L401 804" stroke="#22EE22" stroke-width="3"/><path d="M406 801l5 4 5-4M411 805v7" stroke="#22DD22" stroke-width="1" fill="none"/><path d="M393 820.5L430 824" stroke="#FF0000" stroke-width="4"/><polygon points="428,818 440.5,825.5 428,828.5" fill="#FF0000"/><path d="M431 813l10 9M441 813l-10 9" stroke="#EE1111" stroke-width="1"/></g></svg>
<div class="a" style="left:337px;top:869px;width:922px;height:28px;background:#ECE9D8"></div>
<div class="a" style="left:338px;top:871px;width:200px;height:24px;background:linear-gradient(#FEFEFC,#F4F3EE 60%,#E4E2D6);border-radius:3px"></div>
<div class="a" style="left:341px;top:875px;width:2px;height:15px;background-image:linear-gradient(#B8B5A8 50%,transparent 50%);background-size:2px 3px"></div>
<svg style="left:347px;top:874px" width="18" height="18" viewBox="0 0 18 18"><path d="M1 3H14M4 3V17" stroke="#D88A96" stroke-width="2.5"/><path d="M8 8l6 6" stroke="#5070B0" stroke-width="1.5"/><path d="M10 11l3-1 1 3z" fill="#A0B8E0" stroke="#5070B0"/></svg>
<div class="t" style="left:368px;top:878px;">正交</div>
<div class="a" style="left:396px;top:872px;width:75px;height:22px;background:#E1E6EE;border:1px solid #316AC5"></div>
<svg style="left:399px;top:874px" width="18" height="18" viewBox="0 0 18 18"><path d="M2 1V16M14 1V16" stroke="#A04050" stroke-width="1.3"/><circle cx="2" cy="8" r="1.5" fill="#A04050"/><circle cx="14" cy="8" r="1.5" fill="#A04050"/><path d="M5 10c2-4 8-4 9 1 0 4-5 6-9 4z" fill="#F0C860" stroke="#A08030"/></svg>
<div class="t" style="left:418px;top:878px;">对象捕捉</div>
<div class="a" style="left:471px;top:872px;width:80px;height:22px;background:#E1E6EE;border:1px solid #316AC5"></div>
<svg style="left:474px;top:874px" width="18" height="18" viewBox="0 0 18 18"><path d="M1 2H16" stroke="#B04050" stroke-width="1.3"/><rect x="2.5" y="5.5" width="13" height="11" fill="#fff" stroke="#444"/><path d="M3 8H15" stroke="#444"/><text x="5" y="15" font-size="7" font-family="Liberation Sans" fill="#000">12</text></svg>
<div class="t" style="left:494px;top:878px;">动态输入</div>
<div class="a" style="left:0;top:897px;width:1259px;height:10px;background:#ECE9D8"></div>
<div class="a" style="left:1px;top:899px;width:146px;height:12px;border-top:1px solid #ACA899;border-left:1px solid #ACA899"></div>
<div class="a" style="left:150px;top:899px;width:78px;height:12px;border-top:1px solid #ACA899;border-left:1px solid #ACA899"></div>
<div class="a" style="left:230px;top:899px;width:97px;height:12px;border-top:1px solid #ACA899;border-left:1px solid #ACA899"></div>
<div class="a" style="left:330px;top:899px;width:49px;height:12px;border-top:1px solid #ACA899;border-left:1px solid #ACA899"></div>
<div class="a" style="left:381px;top:899px;width:878px;height:12px;border-top:1px solid #ACA899;border-left:1px solid #ACA899"></div>
<div class="t" style="left:4px;top:902px;font-size:12px"><span class="m" style="font-size:11px">X = 1200 Y = 1000</span></div>
<div class="t" style="left:153px;top:902px">层高<span class="m">: 3</span></div>
<div class="t" style="left:232px;top:902px">底标高<span class="m">: -3.25</span></div>
<div class="t" style="left:333px;top:902px"><span class="m">0</span></div>
<div class="t" style="left:385px;top:902px">多种布尔并层当前构件类型到构件</div>
<div class="a" style="left:200px;top:169px;width:404px;height:632px;background:linear-gradient(90deg,#5A6CD4 0,#7A90E2 2px,#7A90E2 400px,#5A6CD4 404px);border-radius:2px 2px 0 0"></div>
<div class="a" style="left:200px;top:796px;width:404px;height:5px;background:linear-gradient(#7A90E2,#5A6CD4)"></div>
<div class="a" style="left:201px;top:170px;width:402px;height:21px;background:linear-gradient(90deg,#7896E0,#86A6EC 60%,#7E9CE6)"></div>
<div class="t" style="left:204px;top:175px;font-size:13px;line-height:13px;font-weight:bold;color:#DCE5F7">属性编辑器</div>
<div class="a" style="left:586px;top:175px;width:12px;height:12px;background:#C2707E;border:1px solid #E8D0E0;border-radius:2px"></div>
<svg style="left:586px;top:175px" width="12" height="12" viewBox="0 0 12 12"><path d="M3 3l6 6M9 3l-6 6" stroke="#fff" stroke-width="2"/></svg>
<div class="a" style="left:204px;top:191px;width:396px;height:605px;background:#fff"></div>
<div class="a" style="left:204px;top:191px;width:1px;height:403px;background:#7F9DB9"></div>
<div class="a" style="left:205px;top:192px;width:393px;height:23px;background:linear-gradient(#FDFDFB,#EDEAE0)"></div>
<div class="a" style="left:348px;top:192px;width:218px;height:23px;background:linear-gradient(#FADB9E,#F0C262)"></div>
<div class="a" style="left:226px;top:194px;width:1px;height:21px;background:#CFCCC0"></div>
<div class="a" style="left:347px;top:194px;width:1px;height:21px;background:#CFCCC0"></div>
<div class="a" style="left:566px;top:194px;width:1px;height:21px;background:#CFCCC0"></div>
<div class="a" style="left:597px;top:192px;width:1px;height:233px;background:#CFCCC0"></div>
<div class="t" style="left:263px;top:198px;">属性名称</div>
<div class="t" style="left:438px;top:198px;color:#6A0A6A">属性值</div>
<div class="t" style="left:569px;top:198px;">附加</div>
<div class="a" style="left:205px;top:215px;width:393px;height:1px;background:#CFCCC0"></div>
<div class="a" style="left:205px;top:216px;width:21px;height:19px;background:linear-gradient(#FCFCFA,#EDEAE0)"></div>
<div class="t" style="left:205px;width:21px;text-align:center;top:219px;color:#000;font-size:12px">1</div>
<div class="a" style="left:205px;top:234px;width:393px;height:1px;background:#CFCCC0"></div>
<div class="a" style="left:226px;top:216px;width:1px;height:19px;background:#CFCCC0"></div>
<div class="a" style="left:347px;top:216px;width:1px;height:19px;background:#CFCCC0"></div>
<div class="a" style="left:566px;top:216px;width:1px;height:19px;background:#CFCCC0"></div>
<div class="t" style="left:247px;top:219px;color:#0000FF">名称</div>
<div class="t" style="left:350px;top:219px;color:#000"><span class="m">DJ-1-1</span></div>
<div class="a" style="left:205px;top:235px;width:21px;height:19px;background:linear-gradient(#FAD9A0,#F7CB80)"></div>
<div class="t" style="left:205px;width:21px;text-align:center;top:238px;color:#7A0A3A;font-size:12px">2</div>
<div class="a" style="left:227px;top:235px;width:120px;height:19px;background:#316AC5"></div>
<div class="a" style="left:348px;top:235px;width:218px;height:19px;background:#DFE8F6"></div>
<div class="a" style="left:205px;top:253px;width:393px;height:1px;background:#CFCCC0"></div>
<div class="a" style="left:226px;top:235px;width:1px;height:19px;background:#CFCCC0"></div>
<div class="a" style="left:347px;top:235px;width:1px;height:19px;background:#CFCCC0"></div>
<div class="a" style="left:566px;top:235px;width:1px;height:19px;background:#CFCCC0"></div>
<div class="t" style="left:247px;top:238px;color:#fff">截面形状</div>
<div class="t" style="left:350px;top:238px;color:#000">四棱锥台形独立基础</div>
<div class="a" style="left:576px;top:238px;width:13px;height:13px;border:1px solid #1C5180;background:linear-gradient(135deg,#DCDCD7,#fff)"></div>
<div class="a" style="left:205px;top:254px;width:21px;height:19px;background:linear-gradient(#FCFCFA,#EDEAE0)"></div>
<div class="t" style="left:205px;width:21px;text-align:center;top:257px;color:#000;font-size:12px">3</div>
<div class="a" style="left:205px;top:272px;width:393px;height:1px;background:#CFCCC0"></div>
<div class="a" style="left:226px;top:254px;width:1px;height:19px;background:#CFCCC0"></div>
<div class="a" style="left:347px;top:254px;width:1px;height:19px;background:#CFCCC0"></div>
<div class="a" style="left:566px;top:254px;width:1px;height:19px;background:#CFCCC0"></div>
<div class="t" style="left:247px;top:257px;color:#8A8A8A">截面长度<span class="m">(mm)</span></div>
<div class="t" style="left:350px;top:258px;font-size:11px;line-height:11px;color:#8A8A8A">1200</div>
<div class="a" style="left:576px;top:257px;width:13px;height:13px;border:1px solid #1C5180;background:linear-gradient(135deg,#DCDCD7,#fff)"></div>
<div class="a" style="left:205px;top:273px;width:21px;height:19px;background:linear-gradient(#FCFCFA,#EDEAE0)"></div>
<div class="t" style="left:205px;width:21px;text-align:center;top:276px;color:#000;font-size:12px">4</div>
<div class="a" style="left:205px;top:291px;width:393px;height:1px;background:#CFCCC0"></div>
<div class="a" style="left:226px;top:273px;width:1px;height:19px;background:#CFCCC0"></div>
<div class="a" style="left:347px;top:273px;width:1px;height:19px;background:#CFCCC0"></div>
<div class="a" style="left:566px;top:273px;width:1px;height:19px;background:#CFCCC0"></div>
<div class="t" style="left:247px;top:276px;color:#8A8A8A">截面宽度<span class="m">(mm)</span></div>
<div class="t" style="left:350px;top:277px;font-size:11px;line-height:11px;color:#8A8A8A">1200</div>
<div class="a" style="left:576px;top:276px;width:13px;height:13px;border:1px solid #1C5180;background:linear-gradient(135deg,#DCDCD7,#fff)"></div>
<div class="a" style="left:205px;top:292px;width:21px;height:19px;background:linear-gradient(#FCFCFA,#EDEAE0)"></div>
<div class="t" style="left:205px;width:21px;text-align:center;top:295px;color:#000;font-size:12px">5</div>
<div class="a" style="left:205px;top:310px;width:393px;height:1px;background:#CFCCC0"></div>
<div class="a" style="left:226px;top:292px;width:1px;height:19px;background:#CFCCC0"></div>
<div class="a" style="left:347px;top:292px;width:1px;height:19px;background:#CFCCC0"></div>
<div class="a" style="left:566px;top:292px;width:1px;height:19px;background:#CFCCC0"></div>
<div class="t" style="left:247px;top:295px;color:#8A8A8A">高度<span class="m">(mm)</span></div>
<div class="t" style="left:350px;top:296px;font-size:11px;line-height:11px;color:#8A8A8A">700</div>
<div class="a" style="left:576px;top:295px;width:13px;height:13px;border:1px solid #1C5180;background:linear-gradient(135deg,#DCDCD7,#fff)"></div>
<div class="a" style="left:205px;top:311px;width:21px;height:19px;background:linear-gradient(#FCFCFA,#EDEAE0)"></div>
<div class="t" style="left:205px;width:21px;text-align:center;top:314px;color:#000;font-size:12px">6</div>
<div class="a" style="left:205px;top:329px;width:393px;height:1px;background:#CFCCC0"></div>
<div class="a" style="left:226px;top:311px;width:1px;height:19px;background:#CFCCC0"></div>
<div class="a" style="left:347px;top:311px;width:1px;height:19px;background:#CFCCC0"></div>
<div class="a" style="left:566px;top:311px;width:1px;height:19px;background:#CFCCC0"></div>
<div class="t" style="left:247px;top:314px;color:#000">相对底标高<span class="m">(m)</span></div>
<div class="t" style="left:350px;top:314px;color:#000"><span class="m">(0)</span></div>
<div class="a" style="left:576px;top:314px;width:13px;height:13px;border:1px solid #1C5180;background:linear-gradient(135deg,#DCDCD7,#fff)"></div>
<div class="a" style="left:205px;top:330px;width:21px;height:19px;background:linear-gradient(#FCFCFA,#EDEAE0)"></div>
<div class="t" style="left:205px;width:21px;text-align:center;top:333px;color:#000;font-size:12px">7</div>
<div class="a" style="left:205px;top:348px;width:393px;height:1px;background:#CFCCC0"></div>
<div class="a" style="left:226px;top:330px;width:1px;height:19px;background:#CFCCC0"></div>
<div class="a" style="left:347px;top:330px;width:1px;height:19px;background:#CFCCC0"></div>
<div class="a" style="left:566px;top:330px;width:1px;height:19px;background:#CFCCC0"></div>
<div class="t" style="left:247px;top:333px;color:#0000FF">横向受力筋</div>
<div class="t" style="left:350px;top:333px;color:#000"><span style="font-size:11px">ф</span><span class="m">12@200</span></div>
<div class="a" style="left:576px;top:333px;width:13px;height:13px;border:1px solid #1C5180;background:linear-gradient(135deg,#DCDCD7,#fff)"></div>
<div class="a" style="left:205px;top:349px;width:21px;height:19px;background:linear-gradient(#FCFCFA,#EDEAE0)"></div>
<div class="t" style="left:205px;width:21px;text-align:center;top:352px;color:#000;font-size:12px">8</div>
<div class="a" style="left:205px;top:367px;width:393px;height:1px;background:#CFCCC0"></div>
<div class="a" style="left:226px;top:349px;width:1px;height:19px;background:#CFCCC0"></div>
<div class="a" style="left:347px;top:349px;width:1px;height:19px;background:#CFCCC0"></div>
<div class="a" style="left:566px;top:349px;width:1px;height:19px;background:#CFCCC0"></div>
<div class="t" style="left:247px;top:352px;color:#0000FF">纵向受力筋</div>
<div class="t" style="left:350px;top:352px;color:#000"><span style="font-size:11px">ф</span><span class="m">12@200</span></div>
<div class="a" style="left:576px;top:352px;width:13px;height:13px;border:1px solid #1C5180;background:linear-gradient(135deg,#DCDCD7,#fff)"></div>
<div class="a" style="left:205px;top:368px;width:21px;height:19px;background:linear-gradient(#FCFCFA,#EDEAE0)"></div>
<div class="t" style="left:205px;width:21px;text-align:center;top:371px;color:#000;font-size:12px">9</div>
<div class="a" style="left:205px;top:386px;width:393px;height:1px;background:#CFCCC0"></div>
<div class="a" style="left:226px;top:368px;width:1px;height:19px;background:#CFCCC0"></div>
<div class="a" style="left:347px;top:368px;width:1px;height:19px;background:#CFCCC0"></div>
<div class="a" style="left:566px;top:368px;width:1px;height:19px;background:#CFCCC0"></div>
<div class="t" style="left:247px;top:371px;color:#0000FF">其它钢筋</div>
<div class="a" style="left:205px;top:387px;width:21px;height:19px;background:linear-gradient(#FCFCFA,#EDEAE0)"></div>
<div class="t" style="left:205px;width:21px;text-align:center;top:390px;color:#000;font-size:12px">10</div>
<div class="a" style="left:205px;top:405px;width:393px;height:1px;background:#CFCCC0"></div>
<div class="a" style="left:226px;top:387px;width:1px;height:19px;background:#CFCCC0"></div>
<div class="a" style="left:347px;top:387px;width:1px;height:19px;background:#CFCCC0"></div>
<div class="a" style="left:566px;top:387px;width:1px;height:19px;background:#CFCCC0"></div>
<div class="t" style="left:247px;top:390px;color:#000">备注</div>
<div class="a" style="left:576px;top:390px;width:13px;height:13px;border:1px solid #1C5180;background:linear-gradient(135deg,#DCDCD7,#fff)"></div>
<div class="a" style="left:205px;top:406px;width:21px;height:19px;background:linear-gradient(#FCFCFA,#EDEAE0)"></div>
<div class="t" style="left:205px;width:21px;text-align:center;top:409px;color:#000;font-size:12px">11</div>
<div class="a" style="left:205px;top:424px;width:393px;height:1px;background:#CFCCC0"></div>
<div class="a" style="left:226px;top:406px;width:1px;height:19px;background:#CFCCC0"></div>
<div class="a" style="left:347px;top:406px;width:1px;height:19px;background:#CFCCC0"></div>
<div class="a" style="left:566px;top:406px;width:1px;height:19px;background:#CFCCC0"></div>
<div class="a" style="left:229px;top:410px;width:13px;height:12px;border:1px solid #C8C8C8;background:#F4F4F2"></div>
<svg style="left:229px;top:410px" width="13" height="12"><path d="M3 6h7M6.5 2.5v7" stroke="#000" stroke-width="1.2"/></svg>
<div class="t" style="left:247px;top:409px;color:#8A8A8A">锚固搭接</div>
<div class="a" style="left:204px;top:593px;width:396px;height:1px;background:#7F9DB9"></div>
<div class="a" style="left:204px;top:594px;width:396px;height:4px;background:#ECE9D8"></div>
<div class="a" style="left:204px;top:597px;width:396px;height:199px;background:#fff"></div>
<div class="a" style="left:205px;top:598px;width:395px;height:198px;background:#000"></div>
<svg style="left:0;top:0" width="1259" height="907"><rect x="340.5" y="610.5" width="145" height="134" fill="none" stroke="#F0F0F0"/><rect x="392.5" y="654.5" width="43" height="44" fill="none" stroke="#F0F0F0"/><path d="M340.5 610.5L392.5 654.5M485.5 610.5L435.5 654.5M485.5 744.5L435.5 698.5M340.5 744.5L392.5 698.5" stroke="#F0F0F0"/><clipPath id="hc"><path d="M341 690 C365 690 395 715 403 744 L341 744z"/></clipPath><path d="M341 690 C365 690 395 715 403 744 L341 744z" fill="#E00000"/><path clip-path="url(#hc)" d="M345.5 688V746M351.1 688V746M356.7 688V746M362.3 688V746M367.9 688V746M373.5 688V746M379.1 688V746M384.7 688V746M390.3 688V746M395.9 688V746M401.5 688V746M407.1 688V746M339 693.5H405M339 699.3H405M339 705.1H405M339 710.9H405M339 716.7H405M339 722.5H405M339 728.3H405M339 734.1H405M339 739.9H405M339 745.7H405" stroke="#fff" stroke-width="1" shape-rendering="crispEdges"/><path d="M341 690 C365 690 395 715 403 744" fill="none" stroke="#fff" stroke-width="1"/><path d="M392.5 744V722.5H398" fill="none" stroke="#fff" stroke-width="1"/><path d="M341.5 744V690M344 744H403" stroke="#F0F0F0"/><path d="M372 700L383 692H420M358 725L392 712H427M392 720V744" stroke="#F0F0F0" stroke-width="0.8" fill="none"/><path d="M329.5 610V745M324 610.5H335M324 744.5H335M340.5 748V762M485.5 748V762M340 754.5H486" stroke="#F0F0F0"/><path d="M326 607L333 614M326 741L333 748M337 751L344 758M482 751L489 758" stroke="#F0F0F0" stroke-width="0.8"/><rect x="323" y="659" width="12" height="30" fill="#000"/><text x="329.5" y="674" transform="rotate(-90 329.5 674)" fill="#F0F0F0" font-size="10" font-family="Liberation Sans" text-anchor="middle" dominant-baseline="central">1200</text><text x="320" y="676" transform="rotate(-90 320 676)" fill="#F0F0F0" font-size="10" font-family="Liberation Sans" text-anchor="middle" dominant-baseline="central">b</text><rect x="398" y="749" width="30" height="11" fill="#000"/><text x="413" y="754.5" fill="#F0F0F0" font-size="10" font-family="Liberation Sans" text-anchor="middle" dominant-baseline="central">1200</text><text x="395" y="763" fill="#F0F0F0" font-size="7" font-family="Liberation Sans">a</text></svg>
<div class="t" style="left:370px;top:683px;font-size:10px;line-height:10px;color:#F0F0F0">纵向受力筋</div>
<div class="t" style="left:398px;top:711px;font-size:10px;line-height:10px;color:#F0F0F0">横向受力筋</div>
<div class="t" style="left:342px;top:765px;font-size:16px;line-height:17px;color:#F4F4F4">四棱锥台形独立基础</div>
<div class="a" style="left:340px;top:784px;width:147px;height:4px;background:#fff"></div>
<div class="a" style="left:528px;top:434px;width:740px;height:480px;background:linear-gradient(#0D5FEA,#0A4FD8);border-radius:7px 7px 0 0"></div>
<div class="a" style="left:528px;top:434px;width:740px;height:29px;border-radius:7px 7px 0 0;background:linear-gradient(#4A94FA 0,#0A5AE8 3px,#0052E0 11px,#1B6CF2 19px,#2C80FF 24px,#1E6CF0 27px,#0A48CC 29px)"></div>
<div class="a" style="left:528px;top:462px;width:3px;height:450px;background:linear-gradient(90deg,#0640C8,#1D6AF2)"></div>
<div class="t" style="left:536px;top:442px;font-size:13px;line-height:13px;font-weight:bold;color:#fff;text-shadow:1px 1px 0 #0A2A8A">选择参数化图形</div>
<div class="a" style="left:1251px;top:439px;width:21px;height:21px;background:linear-gradient(135deg,#F08060,#D84020);border:1px solid #fff;border-radius:3px"></div>
<svg style="left:1251px;top:439px" width="21" height="21"><path d="M6 6l9 9M15 6l-9 9" stroke="#fff" stroke-width="2.2"/></svg>
<div class="a" style="left:531px;top:462px;width:728px;height:445px;background:#ECE9D8"></div>
<div class="a" style="left:540px;top:478px;width:481px;height:440px;border:1px solid #D0CFC0;border-radius:4px"></div>
<div class="a" style="left:547px;top:472px;width:27px;height:12px;background:#ECE9D8"></div>
<div class="t" style="left:549px;top:471px;color:#0046D5">图形</div>
<div class="a" style="left:545px;top:489px;width:155px;height:159px;background:#00FFFF;border-top:1px solid #fff;border-left:1px solid #fff;border-right:1px solid #ACA899;border-bottom:1px solid #ACA899"></div>
<div class="a" style="left:545px;top:489px;width:155px;height:159px;border:1px solid #fff;border-right-color:#ACA899;border-bottom-color:#ACA899;box-shadow:inset 0 0 0 0 #000"></div>
<div class="a" style="left:552px;top:498px;width:140px;height:140px;background:#6F91A8;overflow:hidden">
<div class="t" style="left:19px;top:6px;font-family:'Liberation Serif',serif;font-size:18px;line-height:18px;letter-spacing:3.6px;color:#2A2A7E">四棱锥台</div>
<div class="t" style="left:19px;top:27px;font-family:'Liberation Serif',serif;font-size:18px;line-height:18px;letter-spacing:3.6px;color:#2A2A7E">形独立基础</div>
<svg style="left:0;top:0" width="140" height="140" viewBox="0 0 140 140"><g transform="scale(1)"><path d="M38 102.6H93.2V114H38zM93.2 102.6L115.4 75.2V86L93.2 114M38 102.6L66.9 73.7L75.6 70.6H99.9L115.4 75.2M58.6 90.7H84.9L99.9 70.6M58.6 90.7L75.6 70.6M38 102.6L58.6 90.7M93.2 102.6L84.9 90.7" fill="none" stroke="#FFFF00" stroke-width="1.8"/><path d="M38 117V132M93 117V132M38 125.8H93M20.9 90.7H34.8M20.9 103.1H34.8M20.9 114.5H34.8M27.6 90.7V120M76.1 68.5L84.4 60.3M101.4 68L109.2 60.3M83.9 63.9H104.5M105 70.4H119.5M89.6 90.7H103.5M110.2 71L97.3 89.7M120 86H131.4M98.9 114H110.2M125.7 87L105 113" stroke="#111" stroke-width="1.3" fill="none"/><path d="M38 125.8l6-3v6zM93 125.8l-6-3v6zM27.6 90.7l-2.8 6h5.6zM27.6 103.1l-2.8-6h5.6zM27.6 114.5l-2.8 6h5.6zM83.9 63.9l6-3v6zM104.5 63.9l-6-3v6zM110.2 71l-1.2 6.3-4.2-3zM97.3 89.7l1.2-6.3 4.2 3zM125.7 87l-1.2 6.3-4.2-3zM105 113l1.2-6.3 4.2 3z" fill="#111"/><text transform="translate(87.5 61.3) scale(0.77 1)" fill="#fff" font-size="17.6" font-family="Liberation Serif">a1</text><text transform="translate(88 81.5) scale(0.77 1)" fill="#fff" font-size="17.6" font-family="Liberation Serif">b1</text><text transform="translate(10.5 99.5) scale(0.77 1)" fill="#fff" font-size="17.6" font-family="Liberation Serif">h1</text><text transform="translate(12 115) scale(0.77 1)" fill="#fff" font-size="17.6" font-family="Liberation Serif">h</text><text transform="translate(58.5 123.5) scale(0.77 1)" fill="#fff" font-size="17.6" font-family="Liberation Serif">a</text><text transform="translate(121 109) scale(0.77 1)" fill="#fff" font-size="17.6" font-family="Liberation Serif">b</text></g></svg>
</div>
<div class="a" style="left:703px;top:489px;width:155px;height:158px;background:#ECE9D8;border-top:1px solid #fff;border-left:1px solid #fff;border-right:1px solid #ACA899;border-bottom:1px solid #ACA899"></div>
<div class="a" style="left:710px;top:498px;width:140px;height:140px;background:#6F91A8;overflow:hidden">
<div class="t" style="left:31px;top:15px;font-family:'Liberation Serif',serif;font-size:18px;line-height:18px;letter-spacing:1px;color:#2A2A7E">杯形基础</div>
<svg style="left:0;top:0" width="140" height="140" viewBox="0 0 140 140"><g transform="scale(1)"><path d="M20.9 50.7H77.4V110.8H20.9zM28.2 58.9H70.1V102.6H28.2zM36.4 68H61V93.5H36.4zM20.9 50.7L28.2 58.9M77.4 50.7L70.1 58.9M20.9 110.8L28.2 102.6M77.4 110.8L70.1 102.6M36.4 68L28.2 58.9M61 68L70.1 58.9M36.4 93.5L28.2 102.6M61 93.5L70.1 102.6" fill="none" stroke="#D8D860" stroke-width="1.2"/><rect x="44.6" y="76.2" width="8.2" height="9.1" fill="none" stroke="#A8C8C8" stroke-width="1"/><path d="M100.1 61.6H123.8V85.3L131.1 92.6V111.7H92.8V89L100.1 74.4z" fill="none" stroke="#D8D860" stroke-width="1.2"/><path d="M106.5 61.6L113.8 95.3H116.5L117.4 61.6" fill="none" stroke="#A8C8C8" stroke-width="1"/><path d="M13.7 50.7V110.8" stroke="#111" stroke-width="1.3"/><path d="M13.7 50.7l-2.5 5h5zM13.7 110.8l-2.5 -5h5z" fill="#111"/><path d="M24.6 58.9V102.6" stroke="#111" stroke-width="1.3"/><path d="M24.6 58.9l-2.5 5h5zM24.6 102.6l-2.5 -5h5z" fill="#111"/><path d="M65.5 68V93.5" stroke="#111" stroke-width="1.3"/><path d="M65.5 68l-2.5 5h5zM65.5 93.5l-2.5 -5h5z" fill="#111"/><path d="M20.9 117.1H77.4" stroke="#111" stroke-width="1.3"/><path d="M20.9 117.1l5 -2.5v5zM77.4 117.1l-5 -2.5v5z" fill="#111"/><path d="M28.2 106.2H70.1" stroke="#111" stroke-width="1.3"/><path d="M28.2 106.2l5 -2.5v5zM70.1 106.2l-5 -2.5v5z" fill="#111"/><path d="M36.4 97.1H61" stroke="#111" stroke-width="1.3"/><path d="M36.4 97.1l5 -2.5v5zM61 97.1l-5 -2.5v5z" fill="#111"/><path d="M106.5 55.8H117.4" stroke="#111" stroke-width="1.3"/><path d="M106.5 55.8l5 -2.5v5zM117.4 55.8l-5 -2.5v5z" fill="#111"/><path d="M128.3 61.6V96.2" stroke="#111" stroke-width="1.3"/><path d="M128.3 61.6l-2.5 5h5zM128.3 96.2l-2.5 -5h5z" fill="#111"/><path d="M87.4 61.6V111.7" stroke="#111" stroke-width="1.3"/><path d="M87.4 61.6l-2.5 5h5zM87.4 111.7l-2.5 -5h5z" fill="#111"/><path d="M10 50.7H20M10 110.8H20M20.9 113V121M77.4 113V121M82 61.6H100M82 74.4H95M82 85.3H95M82 111.7H95M118 61.6H134M118 96.2H134M106.5 52V59M117.4 52V59" stroke="#222" stroke-width="0.8"/><text transform="translate(9 85.3) scale(0.77 1)" fill="#fff" font-size="15.6" font-family="Liberation Serif">b</text><text transform="translate(18.2 85.3) scale(0.77 1)" fill="#fff" font-size="14.3" font-family="Liberation Serif">b1</text><text transform="translate(31 85.3) scale(0.77 1)" fill="#fff" font-size="14.3" font-family="Liberation Serif">b3</text><text transform="translate(58.3 85.3) scale(0.77 1)" fill="#fff" font-size="14.3" font-family="Liberation Serif">b2</text><text transform="translate(40 74.4) scale(0.77 1)" fill="#fff" font-size="14.3" font-family="Liberation Serif">a3</text><text transform="translate(42.8 99) scale(0.77 1)" fill="#fff" font-size="14.3" font-family="Liberation Serif">a2</text><text transform="translate(42.8 112.6) scale(0.77 1)" fill="#fff" font-size="14.3" font-family="Liberation Serif">a1</text><text transform="translate(44.6 129) scale(0.77 1)" fill="#fff" font-size="15.6" font-family="Liberation Serif">a</text><text transform="translate(104.7 53.4) scale(0.77 1)" fill="#fff" font-size="14.3" font-family="Liberation Serif">a2</text><text transform="translate(79.2 72.5) scale(0.77 1)" fill="#fff" font-size="14.3" font-family="Liberation Serif">h3</text><text transform="translate(79.2 86.2) scale(0.77 1)" fill="#fff" font-size="14.3" font-family="Liberation Serif">h2</text><text transform="translate(79.2 106.2) scale(0.77 1)" fill="#fff" font-size="14.3" font-family="Liberation Serif">h1</text><text transform="translate(104.7 108) scale(0.77 1)" fill="#fff" font-size="14.3" font-family="Liberation Serif">a3</text><text transform="translate(120.1 86.2) scale(0.77 1)" fill="#fff" font-size="15.6" font-family="Liberation Serif">h</text></g></svg>
</div>
<div class="a" style="left:861px;top:489px;width:155px;height:158px;background:#ECE9D8;border-top:1px solid #fff;border-left:1px solid #fff;border-right:1px solid #ACA899;border-bottom:1px solid #ACA899"></div>
<div class="a" style="left:868px;top:498px;width:140px;height:140px;background:#6F91A8;overflow:hidden">
<div class="t" style="left:21px;top:12px;font-family:'Liberation Serif',serif;font-size:18px;line-height:18px;letter-spacing:3px;color:#2A2A7E">独立基础</div>
<div class="t" style="left:21px;top:33px;font-family:'Liberation Serif',serif;font-size:18px;line-height:18px;letter-spacing:3px;color:#2A2A7E">三台</div>
<svg style="left:0;top:0" width="140" height="140" viewBox="0 0 140 140"><g transform="scale(1)"><path d="M18.9 54H73.5V111.3H18.9zM30.2 65.3H63V99H30.2zM40.8 76.2H52.1V88.9H40.8zM76.1 92.2H123V109.3H76.1zM82.1 76.2H117.2V92.2H82.1zM89 59.4H109.4V76.2H89z" fill="none" stroke="#FFFF00" stroke-width="1.8"/><path d="M13.5 54V111.3" stroke="#111" stroke-width="1.3"/><path d="M13.5 54l-2.5 5h5zM13.5 111.3l-2.5 -5h5z" fill="#111"/><path d="M25.1 65.3V99" stroke="#111" stroke-width="1.3"/><path d="M25.1 65.3l-2.5 5h5zM25.1 99l-2.5 -5h5z" fill="#111"/><path d="M18.9 117.1H73.5" stroke="#111" stroke-width="1.3"/><path d="M18.9 117.1l5 -2.5v5zM73.5 117.1l-5 -2.5v5z" fill="#111"/><path d="M30.2 105.3H63" stroke="#111" stroke-width="1.3"/><path d="M30.2 105.3l5 -2.5v5zM63 105.3l-5 -2.5v5z" fill="#111"/><path d="M8 54H18M8 111.3H18M20 65.3H30M20 99H30M18.9 113V121M73.5 113V121M109 59.4H134M117 76.2H134M117 92.2H134M123 109.3H134M126.7 59.4V109.3M52 76.2H60M52 88.9H60" stroke="#111" stroke-width="1.1"/><text transform="translate(9.3 85.3) scale(0.77 1)" fill="#fff" font-size="15.6" font-family="Liberation Serif">a</text><text transform="translate(16.6 85.3) scale(0.77 1)" fill="#fff" font-size="14.3" font-family="Liberation Serif">a1</text><text transform="translate(39.7 73.5) scale(0.77 1)" fill="#fff" font-size="14.3" font-family="Liberation Serif">b2</text><text transform="translate(51.7 87.1) scale(0.77 1)" fill="#fff" font-size="14.3" font-family="Liberation Serif">a2</text><text transform="translate(39.7 108) scale(0.77 1)" fill="#fff" font-size="14.3" font-family="Liberation Serif">b1</text><text transform="translate(43 124.4) scale(0.77 1)" fill="#fff" font-size="15.6" font-family="Liberation Serif">b</text><text transform="translate(118.5 74.4) scale(0.77 1)" fill="#fff" font-size="14.3" font-family="Liberation Serif">h3</text><text transform="translate(118.5 90.7) scale(0.77 1)" fill="#fff" font-size="14.3" font-family="Liberation Serif">h2</text><text transform="translate(118.5 107.1) scale(0.77 1)" fill="#fff" font-size="14.3" font-family="Liberation Serif">h1</text></g></svg>
</div>
<div class="a" style="left:545px;top:651px;width:155px;height:158px;background:#ECE9D8;border-top:1px solid #fff;border-left:1px solid #fff;border-right:1px solid #ACA899;border-bottom:1px solid #ACA899"></div>
<div class="a" style="left:552px;top:660px;width:140px;height:140px;background:#6F91A8;overflow:hidden">
<div class="t" style="left:13px;top:11px;font-family:'Liberation Serif',serif;font-size:18px;line-height:18px;letter-spacing:3px;color:#2A2A7E">独立基础</div>
<div class="t" style="left:13px;top:33px;font-family:'Liberation Serif',serif;font-size:18px;line-height:18px;letter-spacing:3px;color:#2A2A7E">三台有杯口</div>
<svg style="left:0;top:0" width="140" height="140" viewBox="0 0 140 140"><g transform="scale(1)"><path d="M15.3 62.4H72.1V121.9H15.3zM23.5 71.5H63.5V113.9H23.5zM31.3 79.6H56.3V105.1H31.3zM90.8 72.4H110.3V88.4H117.6V104.2H123.6V121.5H77.2V105.1H83.6V88.4H90.8z" fill="none" stroke="#D8D860" stroke-width="1.2"/><rect x="36.2" y="88.7" width="11.9" height="8.2" fill="none" stroke="#A8C8C8" stroke-width="1"/><path d="M94.5 72.4L98.1 101.5H103.6L107.2 72.4" fill="none" stroke="#A8C8C8" stroke-width="1"/><path d="M11.3 62.4V121.9" stroke="#111" stroke-width="1.3"/><path d="M11.3 62.4l-2.5 5h5zM11.3 121.9l-2.5 -5h5z" fill="#111"/><path d="M20.4 71.5V113.9" stroke="#111" stroke-width="1.3"/><path d="M20.4 71.5l-2.5 5h5zM20.4 113.9l-2.5 -5h5z" fill="#111"/><path d="M59.9 79.6V105.1" stroke="#111" stroke-width="1.3"/><path d="M59.9 79.6l-2.5 5h5zM59.9 105.1l-2.5 -5h5z" fill="#111"/><path d="M15.3 126.6H72.1" stroke="#111" stroke-width="1.3"/><path d="M15.3 126.6l5 -2.5v5zM72.1 126.6l-5 -2.5v5z" fill="#111"/><path d="M23.5 66.9H63.5" stroke="#111" stroke-width="1.3"/><path d="M23.5 66.9l5 -2.5v5zM63.5 66.9l-5 -2.5v5z" fill="#111"/><path d="M31.3 109.7H56.3" stroke="#111" stroke-width="1.3"/><path d="M31.3 109.7l5 -2.5v5zM56.3 109.7l-5 -2.5v5z" fill="#111"/><path d="M94.5 66.9H107.2" stroke="#111" stroke-width="1.3"/><path d="M94.5 66.9l5 -2.5v5zM107.2 66.9l-5 -2.5v5z" fill="#111"/><path d="M79.9 72.4V101.5" stroke="#111" stroke-width="1.3"/><path d="M79.9 72.4l-2.5 5h5zM79.9 101.5l-2.5 -5h5z" fill="#111"/><path d="M8 62.4H15M8 121.9H15M120 72.4H134M120 88.4H134M120 104.2H134M120 121.5H134M128.2 72.4V121.5M76 72.4H90M76 101.5H95" stroke="#111" stroke-width="1.1"/><text transform="translate(7.1 99.7) scale(0.77 1)" fill="#fff" font-size="15.6" font-family="Liberation Serif">b</text><text transform="translate(13.5 86) scale(0.77 1)" fill="#fff" font-size="14.3" font-family="Liberation Serif">b1</text><text transform="translate(37.1 76) scale(0.77 1)" fill="#fff" font-size="14.3" font-family="Liberation Serif">a1</text><text transform="translate(36.2 88.7) scale(0.77 1)" fill="#fff" font-size="14.3" font-family="Liberation Serif">a3</text><text transform="translate(29 101) scale(0.77 1)" fill="#fff" font-size="14.3" font-family="Liberation Serif">b3</text><text transform="translate(52.6 99.7) scale(0.77 1)" fill="#fff" font-size="14.3" font-family="Liberation Serif">b2</text><text transform="translate(34.4 112.4) scale(0.77 1)" fill="#fff" font-size="14.3" font-family="Liberation Serif">a2</text><text transform="translate(39.9 127.3) scale(0.77 1)" fill="#fff" font-size="15.6" font-family="Liberation Serif">a</text><text transform="translate(93.6 61.1) scale(0.77 1)" fill="#fff" font-size="14.3" font-family="Liberation Serif">a3</text><text transform="translate(75 93.3) scale(0.77 1)" fill="#fff" font-size="15.6" font-family="Liberation Serif">h</text><text transform="translate(93.6 112.4) scale(0.77 1)" fill="#fff" font-size="14.3" font-family="Liberation Serif">a4</text><text transform="translate(117.2 86) scale(0.77 1)" fill="#fff" font-size="14.3" font-family="Liberation Serif">h3</text><text transform="translate(117.2 101.5) scale(0.77 1)" fill="#fff" font-size="14.3" font-family="Liberation Serif">h2</text><text transform="translate(117.2 118.8) scale(0.77 1)" fill="#fff" font-size="14.3" font-family="Liberation Serif">h1</text></g></svg>
</div>
<div class="a" style="left:703px;top:651px;width:155px;height:158px;background:#ECE9D8;border-top:1px solid #fff;border-left:1px solid #fff;border-right:1px solid #ACA899;border-bottom:1px solid #ACA899"></div>
<div class="a" style="left:710px;top:660px;width:140px;height:140px;background:#6F91A8;overflow:hidden">
<div class="t" style="left:42px;top:11px;font-family:'Liberation Serif',serif;font-size:18px;line-height:18px;letter-spacing:3.3px;color:#2A2A7E">独立基础</div>
<div class="t" style="left:42px;top:32px;font-family:'Liberation Serif',serif;font-size:18px;line-height:18px;letter-spacing:3.3px;color:#2A2A7E">双层带坡</div>
<svg style="left:0;top:0" width="140" height="140" viewBox="0 0 140 140"><g transform="scale(1)"><path d="M21.5 53.7H76.5V118.7H21.5zM29.3 62.3H68.6V109.5H29.3zM38.5 72.8H59.5V99H38.5zM29.3 62.3L38.5 72.8M68.6 62.3L59.5 72.8M29.3 109.5L38.5 99M68.6 109.5L59.5 99M79.6 97.7H126.8V118.7H79.6zM87 97.7L97.5 83.3H109.3L119.8 97.7" fill="none" stroke="#FFFF00" stroke-width="1.8"/><path d="M15 53.7V118.7" stroke="#111" stroke-width="1.3"/><path d="M15 53.7l-2.5 5h5zM15 118.7l-2.5 -5h5z" fill="#111"/><path d="M25 62.3V109.5" stroke="#111" stroke-width="1.3"/><path d="M25 62.3l-2.5 5h5zM25 109.5l-2.5 -5h5z" fill="#111"/><path d="M64 72.8V99" stroke="#111" stroke-width="1.3"/><path d="M64 72.8l-2.5 5h5zM64 99l-2.5 -5h5z" fill="#111"/><path d="M21.5 123H76.5" stroke="#111" stroke-width="1.3"/><path d="M21.5 123l5 -2.5v5zM76.5 123l-5 -2.5v5z" fill="#111"/><path d="M29.3 112H68.6" stroke="#111" stroke-width="1.3"/><path d="M29.3 112l5 -2.5v5zM68.6 112l-5 -2.5v5z" fill="#111"/><path d="M38.5 69H59.5" stroke="#111" stroke-width="1.3"/><path d="M38.5 69l5 -2.5v5zM59.5 69l-5 -2.5v5z" fill="#111"/><path d="M10 53.7H21M10 118.7H21M116 83.3H134M116 97.7H134M120 118.7H134M127 83.3V118.7M21.5 120V127M76.5 120V127" stroke="#111" stroke-width="1.2"/><text transform="translate(11 91.2) scale(0.77 1)" fill="#fff" font-size="15.6" font-family="Liberation Serif">b</text><text transform="translate(21.5 92.5) scale(0.77 1)" fill="#fff" font-size="14.3" font-family="Liberation Serif">b1</text><text transform="translate(56.8 92.5) scale(0.77 1)" fill="#fff" font-size="14.3" font-family="Liberation Serif">b2</text><text transform="translate(39.8 71.5) scale(0.77 1)" fill="#fff" font-size="14.3" font-family="Liberation Serif">a2</text><text transform="translate(41.1 116) scale(0.77 1)" fill="#fff" font-size="14.3" font-family="Liberation Serif">a1</text><text transform="translate(43.7 129.2) scale(0.77 1)" fill="#fff" font-size="15.6" font-family="Liberation Serif">a</text><text transform="translate(121 95.1) scale(0.77 1)" fill="#fff" font-size="14.3" font-family="Liberation Serif">h2</text><text transform="translate(121 113.4) scale(0.77 1)" fill="#fff" font-size="14.3" font-family="Liberation Serif">h1</text></g></svg>
</div>
<div class="a" style="left:861px;top:651px;width:155px;height:158px;background:#ECE9D8;border-top:1px solid #fff;border-left:1px solid #fff;border-right:1px solid #ACA899;border-bottom:1px solid #ACA899"></div>
<div class="a" style="left:868px;top:660px;width:140px;height:140px;background:#6F91A8;overflow:hidden">
<div class="t" style="left:10px;top:7px;font-family:'Liberation Serif',serif;font-size:18px;line-height:18px;letter-spacing:0.4px;color:#2A2A7E">四棱锥台形</div>
<div class="t" style="left:10px;top:27px;font-family:'Liberation Serif',serif;font-size:18px;line-height:18px;letter-spacing:0.4px;color:#2A2A7E">独立基础带柱</div>
<svg style="left:0;top:0" width="140" height="140" viewBox="0 0 140 140"><g transform="scale(1)"><path d="M35.3 104.1H91.9V115.5H35.3zM91.9 104.1L115.2 76.8V87.2L91.9 115.5M35.3 104.1L57.2 83.8M35.3 104.1L57.2 91.2M91.9 104.1L84 91.2M57.2 78.3H84V91.2H57.2zM57.2 78.3L77.5 59.4H101.3L84 78.3M101.3 59.4V71.3L115.2 76.8" fill="none" stroke="#D8D860" stroke-width="1.2"/><path d="M35.3 120V134.4M91.9 120V134.4M35.3 126.9H91.9M19 78.3H32.3M19 92.2H32.3M19 105.1H32.3M19 115.5H32.3M25.4 78.3V115.5M118.7 87.7H129.6M96.4 115.5H107.8M124.7 88.2L104.3 115M103.3 59.4H117.7M86.9 78.3H101.3M107.3 60.4L95.4 77.8M80.5 53.5H102.3M78.5 57.9L87.4 49M103.3 57.9L111.3 50" stroke="#222" stroke-width="1" fill="none"/><path d="M35.3 126.9l5.5-2.7v5.4zM91.9 126.9l-5.5-2.7v5.4zM124.7 88.2l-1 5.6-3.8-2.8zM104.3 115l1-5.6 3.8 2.8zM107.3 60.4l-1 5.6-3.8-2.8zM95.4 77.8l1-5.6 3.8 2.8zM80.5 53.5l5.5-2.7v5.4zM102.3 53.5l-5.5-2.7v5.4z" fill="#111"/><text transform="translate(16.5 89) scale(0.77 1)" fill="#fff" font-size="16.9" font-family="Liberation Serif">h2</text><text transform="translate(16.5 104.5) scale(0.77 1)" fill="#fff" font-size="16.9" font-family="Liberation Serif">h1</text><text transform="translate(17 118.5) scale(0.77 1)" fill="#fff" font-size="16.9" font-family="Liberation Serif">h</text><text transform="translate(59.5 127.5) scale(0.77 1)" fill="#fff" font-size="16.9" font-family="Liberation Serif">a</text><text transform="translate(121 110) scale(0.77 1)" fill="#fff" font-size="16.9" font-family="Liberation Serif">b</text><text transform="translate(102 75.5) scale(0.77 1)" fill="#fff" font-size="16.9" font-family="Liberation Serif">b1</text><text transform="translate(82 50) scale(0.77 1)" fill="#fff" font-size="16.9" font-family="Liberation Serif">a1</text></g></svg>
</div>
<div class="a" style="left:545px;top:813px;width:155px;height:158px;background:#ECE9D8;border-top:1px solid #fff;border-left:1px solid #fff;border-right:1px solid #ACA899;border-bottom:1px solid #ACA899"></div>
<div class="a" style="left:552px;top:822px;width:140px;height:140px;background:#6F91A8;overflow:hidden">
<div class="t" style="left:42px;top:3px;font-family:'Liberation Serif',serif;font-size:16px;line-height:16px;letter-spacing:-0.3px;color:#1E1E96">带短柱</div>
<div class="t" style="left:19px;top:19px;font-family:'Liberation Serif',serif;font-size:16px;line-height:16px;letter-spacing:-0.3px;color:#1E1E96">杯口独立基础</div>
<svg style="left:0;top:0" width="140" height="140" viewBox="0 0 140 140"><g transform="scale(1)"><path d="M3.4 45.5H66.2V150M3.4 45.5V150M18.5 59.8H52.7V150M18.5 59.8V150M28.5 71.4H42.8V150M28.5 71.4V150M96.3 41.5H113.8V150M96.3 41.5V150" fill="none" stroke="#E6E640" stroke-width="1.3"/><path d="M101.6 42V53.6H108.6V42" fill="none" stroke="#1A8A1A" stroke-width="1.5"/><path d="M59.8 47V150M47.1 61V150M39.2 73V150M113 41.5H131M113 53.5H125M128.1 41.5V150M57.5 49H60M45 63H47.5M37 75H39.5" stroke="#111" stroke-width="1.3"/><text transform="translate(119 42) rotate(90)" fill="#fff" font-size="11" font-family="Liberation Serif">h4</text><text transform="translate(126 70) rotate(90)" fill="#fff" font-size="12" font-family="Liberation Serif">h3</text><text transform="translate(34 84) rotate(90)" fill="#fff" font-size="11" font-family="Liberation Serif">a2</text><text transform="translate(45 88) rotate(90)" fill="#fff" font-size="11" font-family="Liberation Serif">a1</text></g></svg>
</div>
<div class="a" style="left:1045px;top:472px;width:220px;height:267px;background:#fff;border:1px solid #7F9DB9"></div>
<div class="a" style="left:1046px;top:473px;width:213px;height:23px;background:linear-gradient(#FDFDFB,#EDEAE0)"></div>
<div class="a" style="left:1159px;top:473px;width:99px;height:23px;background:linear-gradient(#FADB9E,#F0C262)"></div>
<div class="a" style="left:1067px;top:475px;width:1px;height:21px;background:#CFCCC0"></div>
<div class="a" style="left:1158px;top:475px;width:1px;height:21px;background:#CFCCC0"></div>
<div class="a" style="left:1257px;top:473px;width:1px;height:138px;background:#CFCCC0"></div>
<div class="t" style="left:1089px;top:478px;">属性名称</div>
<div class="t" style="left:1190px;top:478px;color:#6A0A6A">属性值</div>
<div class="a" style="left:1046px;top:496px;width:212px;height:1px;background:#CFCCC0"></div>
<div class="a" style="left:1046px;top:497px;width:21px;height:19px;background:linear-gradient(#FDD98F,#FBD187)"></div>
<div class="a" style="left:1068px;top:497px;width:90px;height:19px;background:#316AC5"></div>
<div class="a" style="left:1159px;top:497px;width:98px;height:19px;background:#DFE8F6"></div>
<div class="a" style="left:1046px;top:515px;width:212px;height:1px;background:#CFCCC0"></div>
<div class="a" style="left:1067px;top:497px;width:1px;height:19px;background:#CFCCC0"></div>
<div class="a" style="left:1158px;top:497px;width:1px;height:19px;background:#CFCCC0"></div>
<div class="t" style="left:1046px;width:21px;text-align:center;top:500px;font-size:12px;color:#6A0A6A">1</div>
<div class="t m" style="left:1070px;top:501px;font-size:10px;color:#fff">a(mm)</div>
<div class="t" style="left:1160px;top:501px;font-size:11px;line-height:11px">1200</div>
<div class="a" style="left:1046px;top:516px;width:21px;height:19px;background:linear-gradient(#FCFCFA,#EDEAE0)"></div>
<div class="a" style="left:1046px;top:534px;width:212px;height:1px;background:#CFCCC0"></div>
<div class="a" style="left:1067px;top:516px;width:1px;height:19px;background:#CFCCC0"></div>
<div class="a" style="left:1158px;top:516px;width:1px;height:19px;background:#CFCCC0"></div>
<div class="t" style="left:1046px;width:21px;text-align:center;top:519px;font-size:12px;color:#000">2</div>
<div class="t m" style="left:1070px;top:520px;font-size:10px;color:#000">b(mm)</div>
<div class="t" style="left:1160px;top:520px;font-size:11px;line-height:11px">1200</div>
<div class="a" style="left:1046px;top:535px;width:21px;height:19px;background:linear-gradient(#FCFCFA,#EDEAE0)"></div>
<div class="a" style="left:1046px;top:553px;width:212px;height:1px;background:#CFCCC0"></div>
<div class="a" style="left:1067px;top:535px;width:1px;height:19px;background:#CFCCC0"></div>
<div class="a" style="left:1158px;top:535px;width:1px;height:19px;background:#CFCCC0"></div>
<div class="t" style="left:1046px;width:21px;text-align:center;top:538px;font-size:12px;color:#000">3</div>
<div class="t m" style="left:1070px;top:539px;font-size:10px;color:#000">a1(mm)</div>
<div class="t" style="left:1160px;top:539px;font-size:11px;line-height:11px">600</div>
<div class="a" style="left:1046px;top:554px;width:21px;height:19px;background:linear-gradient(#FCFCFA,#EDEAE0)"></div>
<div class="a" style="left:1046px;top:572px;width:212px;height:1px;background:#CFCCC0"></div>
<div class="a" style="left:1067px;top:554px;width:1px;height:19px;background:#CFCCC0"></div>
<div class="a" style="left:1158px;top:554px;width:1px;height:19px;background:#CFCCC0"></div>
<div class="t" style="left:1046px;width:21px;text-align:center;top:557px;font-size:12px;color:#000">4</div>
<div class="t m" style="left:1070px;top:558px;font-size:10px;color:#000">b1(mm)</div>
<div class="t" style="left:1160px;top:558px;font-size:11px;line-height:11px">600</div>
<div class="a" style="left:1046px;top:573px;width:21px;height:19px;background:linear-gradient(#FCFCFA,#EDEAE0)"></div>
<div class="a" style="left:1046px;top:591px;width:212px;height:1px;background:#CFCCC0"></div>
<div class="a" style="left:1067px;top:573px;width:1px;height:19px;background:#CFCCC0"></div>
<div class="a" style="left:1158px;top:573px;width:1px;height:19px;background:#CFCCC0"></div>
<div class="t" style="left:1046px;width:21px;text-align:center;top:576px;font-size:12px;color:#000">5</div>
<div class="t m" style="left:1070px;top:577px;font-size:10px;color:#000">h(mm)</div>
<div class="t" style="left:1160px;top:577px;font-size:11px;line-height:11px">300</div>
<div class="a" style="left:1046px;top:592px;width:21px;height:19px;background:linear-gradient(#FCFCFA,#EDEAE0)"></div>
<div class="a" style="left:1046px;top:610px;width:212px;height:1px;background:#CFCCC0"></div>
<div class="a" style="left:1067px;top:592px;width:1px;height:19px;background:#CFCCC0"></div>
<div class="a" style="left:1158px;top:592px;width:1px;height:19px;background:#CFCCC0"></div>
<div class="t" style="left:1046px;width:21px;text-align:center;top:595px;font-size:12px;color:#000">6</div>
<div class="t m" style="left:1070px;top:596px;font-size:10px;color:#000">h1(mm)</div>
<div class="t" style="left:1160px;top:596px;font-size:11px;line-height:11px">400</div>
<div class="a" style="left:1038px;top:752px;width:240px;height:200px;border:1px solid #D0CFC0;border-radius:4px"></div>
<div class="a" style="left:1043px;top:745px;width:52px;height:12px;background:#ECE9D8"></div>
<div class="t" style="left:1045px;top:744px;color:#0046D5">大图预览</div>
<div class="a" style="left:1045px;top:762px;width:210px;height:160px;background:#6F91A8;overflow:hidden">
<div class="t" style="left:28px;top:9px;font-family:'Liberation Serif',serif;font-size:28px;line-height:28px;letter-spacing:5px;color:#2A2A7E">四棱锥台</div>
<div class="t" style="left:28px;top:41px;font-family:'Liberation Serif',serif;font-size:28px;line-height:28px;letter-spacing:5px;color:#2A2A7E">形独立基础</div>
<svg style="left:0;top:0" width="210" height="160" viewBox="0 0 210 160"><g transform="scale(1.5)"><path d="M38 102.6H93.2V114H38zM93.2 102.6L115.4 75.2V86L93.2 114M38 102.6L66.9 73.7L75.6 70.6H99.9L115.4 75.2M58.6 90.7H84.9L99.9 70.6M58.6 90.7L75.6 70.6M38 102.6L58.6 90.7M93.2 102.6L84.9 90.7" fill="none" stroke="#FFFF00" stroke-width="1.8"/><path d="M38 117V132M93 117V132M38 125.8H93M20.9 90.7H34.8M20.9 103.1H34.8M20.9 114.5H34.8M27.6 90.7V120M76.1 68.5L84.4 60.3M101.4 68L109.2 60.3M83.9 63.9H104.5M105 70.4H119.5M89.6 90.7H103.5M110.2 71L97.3 89.7M120 86H131.4M98.9 114H110.2M125.7 87L105 113" stroke="#111" stroke-width="1.3" fill="none"/><path d="M38 125.8l6-3v6zM93 125.8l-6-3v6zM27.6 90.7l-2.8 6h5.6zM27.6 103.1l-2.8-6h5.6zM27.6 114.5l-2.8 6h5.6zM83.9 63.9l6-3v6zM104.5 63.9l-6-3v6zM110.2 71l-1.2 6.3-4.2-3zM97.3 89.7l1.2-6.3 4.2 3zM125.7 87l-1.2 6.3-4.2-3zM105 113l1.2-6.3 4.2 3z" fill="#111"/><text transform="translate(87.5 61.3) scale(0.77 1)" fill="#fff" font-size="17.6" font-family="Liberation Serif">a1</text><text transform="translate(88 81.5) scale(0.77 1)" fill="#fff" font-size="17.6" font-family="Liberation Serif">b1</text><text transform="translate(10.5 99.5) scale(0.77 1)" fill="#fff" font-size="17.6" font-family="Liberation Serif">h1</text><text transform="translate(12 115) scale(0.77 1)" fill="#fff" font-size="17.6" font-family="Liberation Serif">h</text><text transform="translate(58.5 123.5) scale(0.77 1)" fill="#fff" font-size="17.6" font-family="Liberation Serif">a</text><text transform="translate(121 109) scale(0.77 1)" fill="#fff" font-size="17.6" font-family="Liberation Serif">b</text></g></svg>
</div>
<svg style="left:0;top:0" width="1259" height="907"><ellipse cx="89" cy="401.5" rx="45" ry="16" fill="none" stroke="#E04848" stroke-width="1"/><ellipse cx="732" cy="340.5" rx="50" ry="28.5" fill="none" stroke="#D04040" stroke-width="1.1"/><ellipse cx="629.2" cy="567" rx="47" ry="54.5" fill="none" stroke="#E03C3C" stroke-width="1"/><polygon points="133.8,398.6 568.0,545.8 566.6,549.8 581.0,547.8 570.7,537.5 569.4,541.5 134.2,397.4" fill="#F23C3C"/><polygon points="597.1,523.4 693.5,383.9 696.3,385.8 698.2,373.8 687.7,380.0 690.5,381.9 595.9,522.6" fill="#F23C3C"/></svg>
</body></html>
